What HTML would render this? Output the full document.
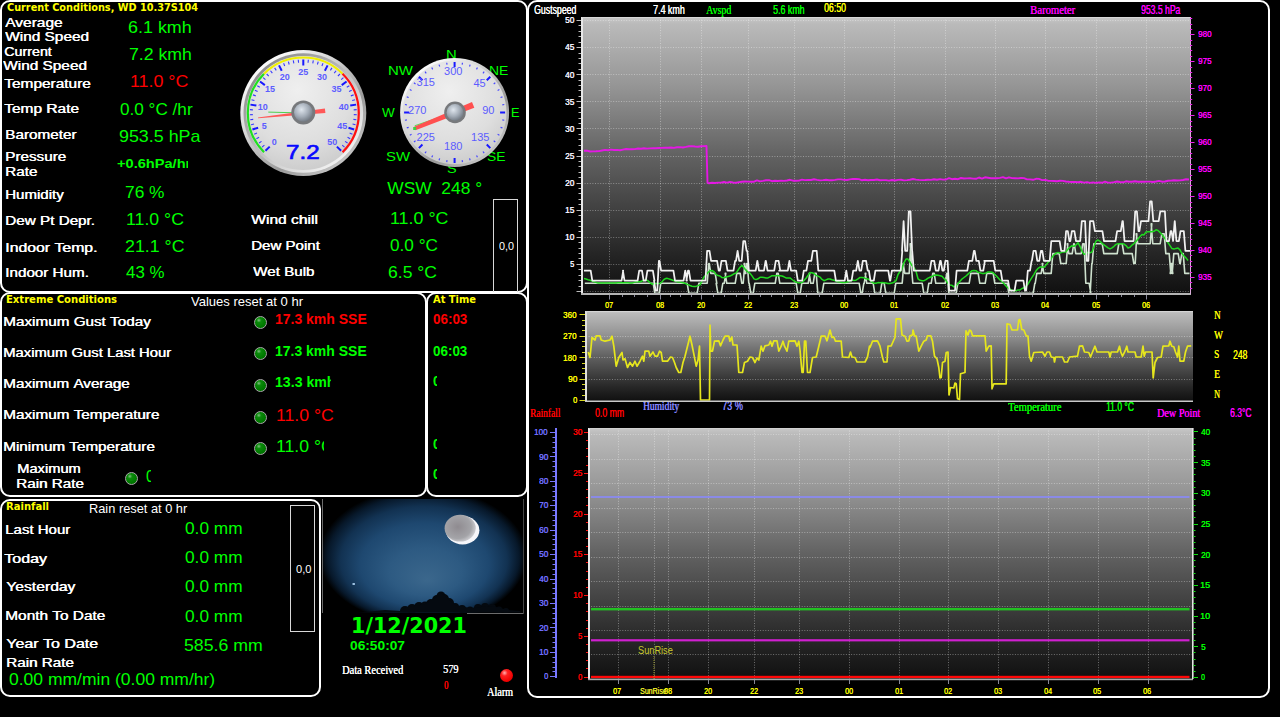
<!DOCTYPE html>
<html><head><meta charset="utf-8"><title>Weather Display</title>
<style>
html,body{margin:0;padding:0;background:#000;}
body{width:1280px;height:717px;position:relative;overflow:hidden;font-family:"Liberation Sans",sans-serif;}
.p{position:absolute;box-sizing:border-box;border:2px solid #fff;border-radius:10px;}
.t{position:absolute;white-space:pre;transform-origin:0 0;}
.c{position:absolute;overflow:hidden;}
.bx{position:absolute;box-sizing:border-box;border:1px solid #d8d8d8;}
.led{position:absolute;width:13px;height:13px;border-radius:50%;box-sizing:border-box;border:1px solid #a8a8a8;background:radial-gradient(circle at 35% 30%,#7fbf7f 0,#0a8a0a 22%,#007a00 60%,#006400 100%);}
svg{position:absolute;left:0;top:0;}
</style></head><body>

<div class="p" style="left:0;top:0;width:527.5px;height:292.6px"></div>
<div class="p" style="left:0;top:292px;width:427px;height:205px"></div>
<div class="p" style="left:426px;top:292px;width:101.5px;height:205px"></div>
<div class="p" style="left:0;top:499px;width:321px;height:198px"></div>
<div class="p" style="left:526.5px;top:0;width:743.5px;height:698px"></div>
<div class="bx" style="left:493px;top:199px;width:25.4px;height:93px;border-bottom:none"></div>
<div class="bx" style="left:290px;top:505px;width:25.4px;height:127px"></div>

<svg width="1280" height="717" viewBox="0 0 1280 717">
<defs>
<linearGradient id="gg" x1="0" y1="0" x2="0" y2="1"><stop offset="0" stop-color="#c8c8c8"/><stop offset="0.025" stop-color="#bababa"/><stop offset="0.25" stop-color="#959595"/><stop offset="0.5" stop-color="#626262"/><stop offset="0.85" stop-color="#262626"/><stop offset="1" stop-color="#101010"/></linearGradient>
</defs>
<rect x="582" y="17" width="609" height="277" fill="url(#gg)"/>
<rect x="586" y="311" width="607" height="90" fill="url(#gg)"/>
<rect x="588.5" y="428" width="604.5" height="251" fill="url(#gg)"/>
<path d="M609.5,17V294M660.5,17V294M701.5,17V294M748.5,17V294M794.5,17V294M844.5,17V294M894.5,17V294M945.5,17V294M995.5,17V294M1045.5,17V294M1096.5,17V294M1146.5,17V294M582,20.5H1191M582,47.5H1191M582,74.5H1191M582,101.5H1191M582,128.5H1191M582,156.5H1191M582,183.5H1191M582,210.5H1191M582,237.5H1191M582,264.5H1191M582,291.5H1191M586,336.5H1193M586,357.5H1193M586,379.5H1193M618.5,428V679M654.5,428V679M668.5,428V679M708.5,428V679M754.5,428V679M799.5,428V679M849.5,428V679M899.5,428V679M948.5,428V679M998.5,428V679M1048.5,428V679M1098.5,428V679M1148.5,428V679M588.5,434.5H1193M588.5,459.5H1193M588.5,483.5H1193M588.5,508.5H1193M588.5,532.5H1193M588.5,557.5H1193M588.5,581.5H1193M588.5,606.5H1193M588.5,630.5H1193M588.5,654.5H1193" stroke="#fff" stroke-opacity="0.36" stroke-width="1" stroke-dasharray="1 1.6" fill="none"/>
<polyline points="584.8,283.3 653.2,283.3 654.8,293.2 659.2,293.2 660.8,283.3 687.2,283.3 688.8,293.2 697.2,293.2 698.8,283.3 707.2,283.3 708.8,263.5 709.2,263.5 710.8,273.4 715.2,273.4 716.8,283.3 716.2,283.3 717.8,293.2 721.2,293.2 722.8,283.3 724.2,283.3 725.8,273.4 725.2,273.4 726.8,283.3 735.2,283.3 736.8,273.4 740.2,273.4 741.8,283.3 743.2,283.3 744.8,263.5 744.2,263.5 745.8,273.4 745.2,273.4 746.8,263.5 747.2,263.5 748.8,283.3 749.2,283.3 750.8,293.2 753.2,293.2 754.8,283.3 775.2,283.3 776.8,273.4 778.2,273.4 779.8,283.3 796.2,283.3 797.8,293.2 800.2,293.2 801.8,283.3 808.2,283.3 809.8,273.4 809.2,273.4 810.8,283.3 813.2,283.3 814.8,273.4 816.2,273.4 817.8,293.2 822.2,293.2 823.8,283.3 859.2,283.3 860.8,293.2 862.2,293.2 863.8,283.3 864.2,283.3 865.8,273.4 865.2,273.4 866.8,283.3 873.2,283.3 874.8,293.2 880.2,293.2 881.8,283.3 884.2,283.3 885.8,293.2 894.2,293.2 895.8,283.3 902.2,283.3 903.8,263.5 903.2,263.5 904.8,273.4 909.2,273.4 910.8,243.7 910.2,243.7 911.8,263.5 911.2,263.5 912.8,283.3 922.2,283.3 923.8,293.2 927.2,293.2 928.8,283.3 931.2,283.3 932.8,273.4 934.2,273.4 935.8,283.3 945.2,283.3 946.8,273.4 947.2,273.4 948.8,293.2 956.2,293.2 957.8,283.3 969.2,283.3 970.8,273.4 978.2,273.4 979.8,283.3 985.2,283.3 986.8,273.4 993.2,273.4 994.8,283.3 1007.2,283.3 1008.8,293.2 1033.2,293.2 1034.8,283.3 1035.2,283.3 1036.8,273.4 1041.2,273.4 1042.8,263.5 1042.2,263.5 1043.8,273.4 1051.2,273.4 1052.8,253.6 1059.2,253.6 1060.8,263.5 1066.2,263.5 1067.8,243.7 1067.2,243.7 1068.8,253.6 1072.2,253.6 1073.8,243.7 1074.2,243.7 1075.8,253.6 1081.2,253.6 1082.8,243.7 1084.2,243.7 1085.8,283.3 1089.2,283.3 1090.8,293.2 1090.2,293.2 1091.8,263.5 1092.2,263.5 1093.8,243.7 1102.2,243.7 1103.8,253.6 1117.2,253.6 1118.8,243.7 1122.2,243.7 1123.8,253.6 1132.2,253.6 1133.8,263.5 1135.2,263.5 1136.8,233.8 1136.2,233.8 1137.8,243.7 1150.2,243.7 1151.8,223.9 1151.2,223.9 1152.8,243.7 1160.2,243.7 1161.8,233.8 1164.2,233.8 1165.8,253.6 1169.2,253.6 1170.8,273.4 1170.2,273.4 1171.8,263.5 1171.2,263.5 1172.8,273.4 1172.2,273.4 1173.8,253.6 1178.2,253.6 1179.8,263.5 1180.2,263.5 1181.8,253.6 1183.2,253.6 1184.8,273.4 1189.5,273.4" fill="none" stroke="#d8ecd8" stroke-width="1.6" stroke-linejoin="round" stroke-opacity=".95"/>
<polyline points="584.0,278.6 586.0,279.0 588.0,279.7 590.0,280.3 592.0,281.0 594.0,281.7 596.0,282.4 598.0,283.1 600.0,283.1 602.0,283.1 604.0,283.1 606.0,283.1 608.0,283.1 610.0,283.1 612.0,283.1 614.0,283.1 616.0,283.1 618.0,282.7 620.0,282.7 622.0,282.7 624.0,282.7 626.0,282.7 628.0,282.7 630.0,283.1 632.0,283.1 634.0,282.4 636.0,281.7 638.0,281.7 640.0,281.7 642.0,281.0 644.0,280.3 646.0,280.0 648.0,280.8 650.0,282.6 652.0,284.2 654.0,283.5 656.0,283.5 658.0,283.5 660.0,283.5 662.0,281.7 664.0,279.5 666.0,278.3 668.0,278.6 670.0,279.3 672.0,280.0 674.0,280.7 676.0,281.4 678.0,282.1 680.0,282.1 682.0,282.5 684.0,283.0 686.0,283.8 688.0,284.6 690.0,285.5 692.0,286.2 694.0,286.6 696.0,286.4 698.0,285.6 700.0,284.8 702.0,281.0 704.0,276.9 706.0,274.7 708.0,272.5 710.0,270.7 712.0,270.5 714.0,271.7 716.0,274.4 718.0,275.6 720.0,276.0 722.0,277.6 724.0,277.8 726.0,277.0 728.0,276.5 730.0,276.1 732.0,275.0 734.0,273.8 736.0,273.1 738.0,270.2 740.0,267.2 742.0,265.4 744.0,267.7 746.0,270.4 748.0,271.9 750.0,273.3 752.0,275.9 754.0,278.9 756.0,279.6 758.0,278.8 760.0,277.3 762.0,277.3 764.0,277.6 766.0,277.9 768.0,277.9 770.0,276.8 772.0,275.7 774.0,275.7 776.0,275.7 778.0,275.7 780.0,275.7 782.0,276.0 784.0,276.8 786.0,277.9 788.0,277.9 790.0,277.9 792.0,279.5 794.0,281.0 796.0,282.0 798.0,282.7 800.0,282.7 802.0,282.4 804.0,280.5 806.0,278.3 808.0,275.4 810.0,272.5 812.0,272.7 814.0,273.5 816.0,275.4 818.0,276.1 820.0,277.1 822.0,279.4 824.0,280.7 826.0,279.9 828.0,279.0 830.0,279.0 832.0,279.7 834.0,280.3 836.0,281.0 838.0,281.7 840.0,282.1 842.0,282.4 844.0,282.4 846.0,282.4 848.0,281.7 850.0,281.0 852.0,280.0 854.0,280.4 856.0,280.2 858.0,278.9 860.0,277.4 862.0,277.4 864.0,277.8 866.0,278.8 868.0,279.0 870.0,280.2 872.0,282.1 874.0,283.3 876.0,283.3 878.0,282.6 880.0,282.7 882.0,282.4 884.0,282.7 886.0,283.1 888.0,283.5 890.0,283.5 892.0,283.1 894.0,282.2 896.0,280.7 898.0,274.5 900.0,271.5 902.0,268.8 904.0,262.6 906.0,259.1 908.0,259.1 910.0,262.3 912.0,265.5 914.0,267.7 916.0,271.3 918.0,278.8 920.0,280.3 922.0,280.7 924.0,280.7 926.0,279.6 928.0,278.1 930.0,277.3 932.0,276.5 934.0,275.3 936.0,275.0 938.0,275.3 940.0,275.7 942.0,276.2 944.0,278.4 946.0,280.6 948.0,283.5 950.0,285.0 952.0,285.3 954.0,286.9 956.0,285.7 958.0,283.5 960.0,281.3 962.0,279.0 964.0,277.5 966.0,276.0 968.0,274.1 970.0,272.3 972.0,270.7 974.0,270.4 976.0,270.7 978.0,272.3 980.0,272.7 982.0,273.4 984.0,273.4 986.0,273.0 988.0,271.9 990.0,271.9 992.0,272.2 994.0,273.7 996.0,275.6 998.0,277.8 1000.0,280.0 1002.0,281.4 1004.0,283.7 1006.0,285.9 1008.0,288.1 1010.0,289.3 1012.0,290.1 1014.0,290.9 1016.0,290.6 1018.0,289.9 1020.0,289.9 1022.0,288.5 1024.0,287.8 1026.0,286.5 1028.0,284.0 1030.0,280.7 1032.0,277.3 1034.0,274.3 1036.0,270.8 1038.0,268.4 1040.0,267.1 1042.0,266.9 1044.0,267.3 1046.0,265.1 1048.0,262.4 1050.0,260.4 1052.0,257.4 1054.0,254.8 1056.0,253.2 1058.0,252.4 1060.0,253.2 1062.0,252.1 1064.0,252.1 1066.0,251.8 1068.0,249.1 1070.0,247.2 1072.0,245.7 1074.0,246.4 1076.0,244.9 1078.0,242.7 1080.0,246.3 1082.0,251.3 1084.0,254.3 1086.0,253.7 1088.0,252.2 1090.0,252.9 1092.0,251.9 1094.0,246.5 1096.0,241.1 1098.0,240.0 1100.0,241.4 1102.0,243.3 1104.0,244.8 1106.0,246.3 1108.0,247.8 1110.0,248.9 1112.0,247.8 1114.0,246.3 1116.0,244.4 1118.0,243.8 1120.0,243.8 1122.0,243.8 1124.0,244.1 1126.0,245.6 1128.0,248.0 1130.0,247.3 1132.0,245.1 1134.0,243.6 1136.0,241.4 1138.0,239.1 1140.0,236.5 1142.0,234.5 1144.0,234.9 1146.0,232.0 1148.0,231.7 1150.0,231.7 1152.0,231.7 1154.0,231.3 1156.0,229.8 1158.0,230.5 1160.0,232.4 1162.0,234.6 1164.0,237.3 1166.0,240.1 1168.0,242.7 1170.0,245.7 1172.0,248.6 1174.0,249.1 1176.0,248.4 1178.0,248.0 1180.0,249.9 1182.0,253.6 1184.0,256.0 1186.0,257.9 1188.0,260.5" fill="none" stroke="#1fd81f" stroke-width="1.5" stroke-linejoin="round"/>
<polyline points="584.0,270.7 590.7,270.7 592.3,280.6 621.6,280.6 623.2,270.7 622.9,270.7 624.5,280.6 637.6,280.6 639.2,270.7 642.0,270.7 643.6,280.6 645.8,280.6 647.4,270.7 652.9,270.7 654.5,280.6 654.0,280.6 655.6,290.5 657.3,290.5 658.9,260.8 659.5,260.8 661.1,270.7 673.4,270.7 675.0,280.6 683.6,280.6 685.2,270.7 685.3,270.7 686.9,280.6 686.4,280.6 688.0,270.7 688.9,270.7 690.5,280.6 705.5,280.6 707.1,250.9 709.5,250.9 711.1,260.8 717.1,260.8 718.7,270.7 719.9,270.7 721.5,260.8 725.9,260.8 727.5,270.7 733.5,270.7 735.1,260.8 736.0,260.8 737.6,250.9 737.6,250.9 739.2,260.8 741.7,260.8 743.3,241.0 745.0,241.0 746.6,250.9 747.3,250.9 748.9,270.7 755.7,270.7 757.3,260.8 757.4,260.8 759.0,270.7 764.0,270.7 765.6,260.8 765.9,260.8 767.5,270.7 774.2,270.7 775.8,260.8 778.6,260.8 780.2,270.7 779.2,270.7 780.8,270.7 787.8,270.7 789.4,260.8 789.4,260.8 791.0,270.7 796.2,270.7 797.8,280.6 802.2,280.6 803.8,270.7 806.4,270.7 808.0,260.8 811.3,260.8 812.9,250.9 816.7,250.9 818.3,270.7 834.3,270.7 835.9,280.6 844.7,280.6 846.3,270.7 846.3,270.7 847.9,280.6 851.6,280.6 853.2,270.7 856.2,270.7 857.8,260.8 857.9,260.8 859.5,270.7 861.2,270.7 862.8,260.8 866.1,260.8 867.7,270.7 868.9,270.7 870.5,280.6 873.8,280.6 875.4,270.7 888.3,270.7 889.9,280.6 890.3,280.6 891.9,270.7 900.7,270.7 902.3,250.9 902.0,250.9 903.6,221.2 903.6,221.2 905.2,250.9 907.2,250.9 908.8,211.3 910.5,211.3 912.1,250.9 912.2,250.9 913.8,270.7 929.8,270.7 931.4,260.8 934.2,260.8 935.8,270.7 938.5,270.7 940.1,260.8 940.8,260.8 942.4,270.7 943.8,270.7 945.4,260.8 947.6,260.8 949.2,290.5 955.0,290.5 956.6,270.7 967.3,270.7 968.9,260.8 972.3,260.8 973.9,250.9 974.7,250.9 976.3,260.8 978.8,260.8 980.4,270.7 983.3,270.7 984.9,260.8 984.2,260.8 985.8,260.8 993.7,260.8 995.3,270.7 1000.7,270.7 1002.3,280.6 1008.1,280.6 1009.7,290.5 1014.6,290.5 1016.2,280.6 1023.4,280.6 1025.0,290.5 1026.2,290.5 1027.8,270.7 1030.0,270.7 1031.6,260.8 1031.9,260.8 1033.5,250.9 1035.7,250.9 1037.3,260.8 1039.3,260.8 1040.9,250.9 1042.3,250.9 1043.9,260.8 1049.7,260.8 1051.3,241.0 1059.6,241.0 1061.2,250.9 1064.5,250.9 1066.1,231.1 1067.8,231.1 1069.4,241.0 1070.3,241.0 1071.9,231.1 1074.4,231.1 1076.0,241.0 1080.2,241.0 1081.8,221.2 1085.1,221.2 1086.7,260.8 1088.4,260.8 1090.0,221.2 1093.3,221.2 1094.9,231.1 1102.4,231.1 1104.0,241.0 1115.5,241.0 1117.1,231.1 1120.8,231.1 1122.4,221.2 1122.9,221.2 1124.5,241.0 1133.6,241.0 1135.2,211.3 1136.9,211.3 1138.5,231.1 1139.4,231.1 1141.0,221.2 1148.5,221.2 1150.1,201.4 1151.7,201.4 1153.3,221.2 1158.7,221.2 1160.3,211.3 1164.9,211.3 1166.5,241.0 1169.0,241.0 1170.6,231.1 1171.5,231.1 1173.1,241.0 1173.1,241.0 1174.7,221.2 1174.8,221.2 1176.4,241.0 1178.9,241.0 1180.5,231.1 1183.8,231.1 1185.4,250.9 1189.1,250.9 1190.7,250.9 1189.5,250.9" fill="none" stroke="#f2f2f2" stroke-width="1.75" stroke-linejoin="round"/>
<polyline points="584.0,150.8 587.0,150.7 590.0,151.5 593.0,151.4 596.0,151.3 599.0,151.1 602.0,150.5 605.0,149.9 608.0,150.3 611.0,149.6 614.0,150.0 617.0,149.9 620.0,150.2 623.0,149.6 626.0,149.0 629.0,149.3 632.0,149.2 635.0,149.1 638.0,148.5 641.0,148.8 644.0,148.2 647.0,148.6 650.0,148.4 653.0,148.3 656.0,148.2 659.0,148.0 662.0,147.9 665.0,147.8 668.0,147.7 671.0,147.5 674.0,147.9 677.0,147.3 680.0,147.1 683.0,147.5 686.0,146.9 689.0,146.2 692.0,146.1 695.0,146.5 698.0,146.8 701.0,146.2 704.0,146.1 706.5,146.0 707.5,182.7 709.0,183.3 712.0,182.7 715.0,183.0 718.0,182.6 721.0,182.6 724.0,182.0 727.0,182.6 730.0,181.9 733.0,182.5 736.0,182.8 739.0,182.1 742.0,181.8 745.0,181.5 748.0,181.6 751.0,181.7 754.0,181.7 757.0,180.4 760.0,181.4 763.0,180.9 766.0,180.3 769.0,180.2 772.0,181.2 775.0,180.7 778.0,181.0 781.0,180.6 784.0,180.9 787.0,180.5 790.0,179.8 793.0,180.7 796.0,180.7 799.0,180.6 802.0,179.6 805.0,180.1 808.0,180.0 811.0,180.0 814.0,179.3 817.0,179.9 820.0,180.4 823.0,180.1 826.0,179.7 829.0,180.2 832.0,180.2 835.0,179.9 838.0,179.4 841.0,179.4 844.0,179.9 847.0,180.0 850.0,179.4 853.0,178.9 856.0,179.0 859.0,179.1 862.0,180.3 865.0,179.8 868.0,180.3 871.0,180.0 874.0,180.0 877.0,179.5 880.0,180.2 883.0,180.1 886.0,180.1 889.0,180.6 892.0,180.0 895.0,180.5 898.0,179.9 901.0,179.8 904.0,180.4 907.0,180.1 910.0,179.7 913.0,179.0 916.0,179.6 919.0,179.9 922.0,180.1 925.0,180.0 928.0,179.7 931.0,179.9 934.0,179.2 937.0,179.7 940.0,179.1 943.0,179.6 946.0,179.5 949.0,178.2 952.0,179.2 955.0,178.7 958.0,179.2 961.0,178.0 964.0,178.5 967.0,178.4 970.0,178.3 973.0,178.6 976.0,178.8 979.0,177.5 982.0,178.6 985.0,177.3 988.0,177.8 991.0,178.3 994.0,178.3 997.0,178.2 1000.0,177.9 1003.0,177.1 1006.0,178.4 1009.0,177.3 1012.0,178.1 1015.0,178.2 1018.0,178.4 1021.0,178.0 1024.0,178.1 1027.0,179.4 1030.0,179.4 1033.0,179.8 1036.0,178.8 1039.0,178.9 1042.0,180.1 1045.0,179.9 1048.0,180.7 1051.0,180.9 1054.0,181.0 1057.0,181.2 1060.0,180.8 1063.0,180.9 1066.0,181.5 1069.0,181.8 1072.0,182.0 1075.0,181.9 1078.0,182.3 1081.0,181.8 1084.0,182.6 1087.0,182.1 1090.0,182.9 1093.0,182.4 1096.0,182.9 1099.0,182.4 1102.0,182.8 1105.0,181.7 1108.0,182.6 1111.0,182.6 1114.0,182.1 1117.0,181.5 1120.0,182.0 1123.0,182.3 1126.0,181.3 1129.0,181.8 1132.0,181.8 1135.0,181.2 1138.0,181.7 1141.0,181.7 1144.0,181.7 1147.0,181.6 1150.0,181.6 1153.0,182.0 1156.0,181.5 1159.0,180.9 1162.0,181.7 1165.0,181.5 1168.0,180.8 1171.0,180.6 1174.0,180.3 1177.0,180.5 1180.0,180.4 1183.0,180.0 1186.0,179.3 1189.0,179.5" fill="none" stroke="#e418e4" stroke-width="1.9" stroke-linejoin="round"/>
<polyline points="588.2,352.0 590.0,357.5 592.0,337.5 595.0,340.0 596.2,335.8 600.0,335.8 601.2,340.0 605.0,341.2 610.0,340.0 612.0,336.2 613.8,346.2 616.2,366.2 618.8,357.5 622.0,352.5 623.0,360.0 625.0,358.8 627.5,367.5 630.0,362.5 632.5,366.2 635.0,361.2 637.0,366.2 640.0,361.2 642.5,356.2 643.8,361.2 645.0,351.2 648.8,351.2 650.0,356.2 653.0,352.0 655.0,356.2 657.5,356.2 659.5,351.2 661.2,352.5 662.5,361.2 667.5,361.2 670.5,357.0 672.5,357.5 674.5,362.5 676.2,367.5 678.8,372.5 680.8,372.5 683.0,362.5 685.0,356.2 687.5,346.2 690.0,336.2 692.0,345.0 693.8,353.8 696.2,366.2 698.0,360.0 699.5,346.2 700.5,400.0 709.5,400.0 710.0,325.0 710.8,351.2 712.5,351.2 714.5,341.2 718.8,340.8 720.5,345.8 723.0,340.0 725.0,336.2 728.8,336.2 730.0,341.2 731.8,337.0 733.0,345.0 737.0,345.0 738.8,372.5 742.5,372.5 744.5,362.5 747.5,361.2 750.0,357.0 752.5,357.5 755.0,362.5 757.0,358.0 758.8,360.0 761.2,346.2 763.0,351.2 765.0,345.8 768.8,345.0 770.5,341.2 772.0,346.2 773.8,340.8 777.0,340.8 778.8,351.2 781.2,346.2 783.0,341.2 784.5,346.2 787.0,351.2 788.8,341.2 795.0,340.8 797.0,346.2 798.8,341.2 800.0,350.0 802.0,372.5 803.2,372.5 804.5,341.2 805.8,341.2 807.5,372.5 810.0,372.5 812.5,357.5 816.2,357.0 818.8,346.2 821.2,336.2 825.0,336.2 827.0,340.8 830.0,330.0 832.0,337.5 833.8,337.0 835.5,341.2 841.2,341.2 842.5,357.0 848.8,357.5 850.5,352.0 852.0,357.0 855.0,357.5 857.0,362.0 865.0,362.0 867.5,357.0 869.5,346.2 870.0,347.5 872.5,341.2 877.5,340.8 880.0,346.2 882.5,357.5 883.8,362.0 887.0,362.0 888.0,346.2 891.2,345.8 893.8,340.0 895.0,337.5 896.2,318.8 900.5,318.8 902.0,335.0 905.0,336.2 907.0,341.2 908.8,340.8 910.0,335.8 912.5,335.0 913.0,330.0 914.5,335.8 916.2,336.2 918.8,351.2 921.2,346.2 923.8,341.2 926.2,340.0 927.5,335.8 930.8,335.8 932.5,341.2 934.5,356.2 937.0,358.8 938.8,367.5 940.0,378.0 941.2,377.5 942.5,362.5 945.0,361.2 946.2,352.5 948.0,352.0 949.0,395.0 950.5,387.5 953.8,388.0 955.0,383.0 956.2,383.8 957.5,398.8 959.5,399.5 960.5,373.8 965.0,372.5 966.0,330.8 968.0,335.0 969.5,330.0 971.2,331.2 972.5,335.8 985.0,335.8 986.2,351.2 988.8,346.2 991.2,345.8 992.0,388.8 993.8,383.8 1006.2,383.8 1007.0,323.8 1010.0,324.5 1012.0,330.0 1017.5,330.0 1018.8,320.0 1020.0,319.5 1021.8,329.5 1023.8,330.0 1026.2,335.8 1028.0,336.2 1029.5,356.2 1031.2,361.2 1033.8,352.5 1042.5,352.0 1045.0,356.2 1047.0,352.0 1049.5,352.0 1051.2,357.0 1053.8,357.5 1054.5,362.0 1055.5,357.0 1062.5,357.0 1064.5,362.0 1067.5,362.0 1069.5,357.0 1077.5,356.2 1079.5,346.2 1082.5,345.8 1084.5,352.0 1088.8,352.5 1090.5,357.0 1092.5,352.0 1095.0,346.2 1097.0,352.0 1108.8,352.0 1110.0,357.0 1111.2,352.0 1117.5,352.0 1119.5,346.2 1120.8,352.0 1122.5,356.2 1125.0,351.2 1126.8,346.2 1128.0,352.0 1135.0,352.0 1136.2,357.0 1141.2,357.0 1143.0,346.2 1144.2,356.2 1145.5,352.0 1152.0,352.0 1153.2,378.0 1155.0,362.5 1157.5,357.5 1161.2,357.0 1163.0,346.2 1168.8,345.8 1170.0,341.2 1171.8,346.2 1173.8,346.8 1175.5,352.0 1177.5,357.0 1178.8,346.2 1180.0,361.2 1183.8,361.2 1185.5,352.0 1187.5,346.2 1191.2,345.8" fill="none" stroke="#e6e61e" stroke-width="1.7" stroke-linejoin="round"/>
<rect x="591" y="496" width="598.5" height="2" fill="#8a8ae6"/>
<rect x="591" y="608" width="598.5" height="2.4" fill="#22c022"/>
<rect x="591" y="639.2" width="598.5" height="2.2" fill="#d020d0"/>
<rect x="591" y="675.8" width="598.5" height="2.3" fill="#ff0808"/>
<path d="M654,656V679" stroke="#b8b830" stroke-width="1" stroke-dasharray="1 1" stroke-opacity=".8" fill="none"/>
<rect x="581" y="17" width="2" height="278" fill="#e8e8e8"/>
<rect x="581" y="293" width="610" height="2" fill="#b4b4b4"/>
<rect x="582" y="17" width="609" height="1" fill="#d8d8d8"/>
<rect x="1190" y="17" width="1" height="277" fill="#d8a8d8"/>
<path d="M576.5,291.5H581M578.5,286.5H581M578.5,280.5H581M578.5,275.5H581M578.5,269.5H581M576.5,264.5H581M578.5,258.5H581M578.5,253.5H581M578.5,248.5H581M578.5,242.5H581M576.5,237.5H581M578.5,231.5H581M578.5,226.5H581M578.5,221.5H581M578.5,215.5H581M576.5,210.5H581M578.5,204.5H581M578.5,199.5H581M578.5,193.5H581M578.5,188.5H581M576.5,183.5H581M578.5,177.5H581M578.5,172.5H581M578.5,166.5H581M578.5,161.5H581M576.5,156.5H581M578.5,150.5H581M578.5,145.5H581M578.5,139.5H581M578.5,134.5H581M576.5,128.5H581M578.5,123.5H581M578.5,118.5H581M578.5,112.5H581M578.5,107.5H581M576.5,101.5H581M578.5,96.5H581M578.5,90.5H581M578.5,85.5H581M578.5,80.5H581M576.5,74.5H581M578.5,69.5H581M578.5,63.5H581M578.5,58.5H581M578.5,53.5H581M576.5,47.5H581M578.5,42.5H581M578.5,36.5H581M578.5,31.5H581M578.5,25.5H581M576.5,20.5H581" stroke="#bcbcbc" stroke-width="1" fill="none"/>
<path d="M1190,288.5H1192.2M1190,282.5H1192.2M1190,277.5H1194.5M1190,272.5H1192.2M1190,266.5H1192.2M1190,261.5H1192.2M1190,255.5H1192.2M1190,250.5H1194.5M1190,245.5H1192.2M1190,239.5H1192.2M1190,234.5H1192.2M1190,228.5H1192.2M1190,223.5H1194.5M1190,218.5H1192.2M1190,212.5H1192.2M1190,207.5H1192.2M1190,202.5H1192.2M1190,196.5H1194.5M1190,191.5H1192.2M1190,185.5H1192.2M1190,180.5H1192.2M1190,175.5H1192.2M1190,169.5H1194.5M1190,164.5H1192.2M1190,158.5H1192.2M1190,153.5H1192.2M1190,148.5H1192.2M1190,142.5H1194.5M1190,137.5H1192.2M1190,131.5H1192.2M1190,126.5H1192.2M1190,121.5H1192.2M1190,115.5H1194.5M1190,110.5H1192.2M1190,104.5H1192.2M1190,99.5H1192.2M1190,94.5H1192.2M1190,88.5H1194.5M1190,83.5H1192.2M1190,77.5H1192.2M1190,72.5H1192.2M1190,67.5H1192.2M1190,61.5H1194.5M1190,56.5H1192.2M1190,50.5H1192.2M1190,45.5H1192.2M1190,40.5H1192.2M1190,34.5H1194.5M1190,29.5H1192.2M1190,24.5H1192.2M1190,18.5H1192.2" stroke="#ee22ee" stroke-width="1.2" fill="none"/>
<path d="M609.5,295V299.5M660.5,295V299.5M701.5,295V299.5M748.5,295V299.5M794.5,295V299.5M844.5,295V299.5M894.5,295V299.5M945.5,295V299.5M995.5,295V299.5M1045.5,295V299.5M1096.5,295V299.5M1146.5,295V299.5M622.5,295V297M634.5,295V297M647.5,295V297M670.5,295V297M680.5,295V297M691.5,295V297M713.5,295V297M724.5,295V297M736.5,295V297M760.5,295V297M771.5,295V297M782.5,295V297M806.5,295V297M819.5,295V297M832.5,295V297M856.5,295V297M869.5,295V297M882.5,295V297M907.5,295V297M920.5,295V297M932.5,295V297M958.5,295V297M970.5,295V297M982.5,295V297M1008.5,295V297M1020.5,295V297M1032.5,295V297M1058.5,295V297M1070.5,295V297M1083.5,295V297M1108.5,295V297M1121.5,295V297M1134.5,295V297" stroke="#889" stroke-width="1" fill="none"/>
<rect x="585" y="311" width="2" height="91" fill="#e0e0e0"/>
<rect x="585" y="400.5" width="608" height="1.5" fill="#c8c8c8"/>
<rect x="586" y="311" width="607" height="1" fill="#d4d4d4"/>
<path d="M579.5,400.5H585M582,395.5H585M582,389.5H585M582,384.5H585M579.5,379.5H585M582,373.5H585M582,368.5H585M582,363.5H585M579.5,357.5H585M582,352.5H585M582,346.5H585M582,341.5H585M579.5,336.5H585M582,330.5H585M582,325.5H585M582,320.5H585M579.5,314.5H585" stroke="#d8d820" stroke-width="1.2" fill="none"/>
<rect x="588" y="428" width="2" height="252" fill="#ececec"/>
<rect x="588" y="678.6" width="605" height="1.6" fill="#a8a8a8"/>
<rect x="589" y="428" width="604" height="1" fill="#d0d0d0"/>
<rect x="1192" y="428" width="1.6" height="251" fill="#e4e4e4"/>
<rect x="555" y="428" width="2" height="250" fill="#7878ff"/>
<path d="M550,676.5H555M552.5,671.5H555M552.5,667.5H555M552.5,662.5H555M552.5,657.5H555M550,652.5H555M552.5,647.5H555M552.5,642.5H555M552.5,637.5H555M552.5,632.5H555M550,627.5H555M552.5,623.5H555M552.5,618.5H555M552.5,613.5H555M552.5,608.5H555M550,603.5H555M552.5,598.5H555M552.5,593.5H555M552.5,588.5H555M552.5,583.5H555M550,579.5H555M552.5,574.5H555M552.5,569.5H555M552.5,564.5H555M552.5,559.5H555M550,554.5H555M552.5,549.5H555M552.5,544.5H555M552.5,539.5H555M552.5,535.5H555M550,530.5H555M552.5,525.5H555M552.5,520.5H555M552.5,515.5H555M552.5,510.5H555M550,505.5H555M552.5,500.5H555M552.5,496.5H555M552.5,491.5H555M552.5,486.5H555M550,481.5H555M552.5,476.5H555M552.5,471.5H555M552.5,466.5H555M552.5,461.5H555M550,456.5H555M552.5,452.5H555M552.5,447.5H555M552.5,442.5H555M552.5,437.5H555M550,432.5H555" stroke="#7878ff" stroke-width="1.2" fill="none"/>
<path d="M584,677.5H588M586,668.5H588M586,660.5H588M586,652.5H588M586,644.5H588M584,636.5H588M586,628.5H588M586,620.5H588M586,611.5H588M586,603.5H588M584,595.5H588M586,587.5H588M586,579.5H588M586,571.5H588M586,562.5H588M584,554.5H588M586,546.5H588M586,538.5H588M586,530.5H588M586,522.5H588M584,514.5H588M586,505.5H588M586,497.5H588M586,489.5H588M586,481.5H588M584,473.5H588M586,465.5H588M586,456.5H588M586,448.5H588M586,440.5H588M584,432.5H588" stroke="#ff1010" stroke-width="1.2" fill="none"/>
<path d="M1193.5,677.5H1198M1193.5,671.5H1195.5M1193.5,665.5H1195.5M1193.5,659.5H1195.5M1193.5,652.5H1195.5M1193.5,646.5H1198M1193.5,640.5H1195.5M1193.5,634.5H1195.5M1193.5,628.5H1195.5M1193.5,622.5H1195.5M1193.5,616.5H1198M1193.5,609.5H1195.5M1193.5,603.5H1195.5M1193.5,597.5H1195.5M1193.5,591.5H1195.5M1193.5,585.5H1198M1193.5,579.5H1195.5M1193.5,573.5H1195.5M1193.5,566.5H1195.5M1193.5,560.5H1195.5M1193.5,554.5H1198M1193.5,548.5H1195.5M1193.5,542.5H1195.5M1193.5,536.5H1195.5M1193.5,530.5H1195.5M1193.5,524.5H1198M1193.5,517.5H1195.5M1193.5,511.5H1195.5M1193.5,505.5H1195.5M1193.5,499.5H1195.5M1193.5,493.5H1198M1193.5,487.5H1195.5M1193.5,481.5H1195.5M1193.5,474.5H1195.5M1193.5,468.5H1195.5M1193.5,462.5H1198M1193.5,456.5H1195.5M1193.5,450.5H1195.5M1193.5,444.5H1195.5M1193.5,438.5H1195.5M1193.5,431.5H1198" stroke="#10e010" stroke-width="1.2" fill="none"/>
<path d="M618.5,680V684M668.5,680V684M708.5,680V684M754.5,680V684M799.5,680V684M849.5,680V684M899.5,680V684M948.5,680V684M998.5,680V684M1048.5,680V684M1098.5,680V684M1148.5,680V684" stroke="#889" stroke-width="1" fill="none"/>
</svg>
<div class="t" style="left:445.91px;top:46.40px;font-family:'Liberation Sans',sans-serif;font-weight:normal;font-size:13.62px;line-height:18px;color:#00ff00;transform:scaleX(1.0875)">N</div>
<div class="t" style="left:387.70px;top:61.70px;font-family:'Liberation Sans',sans-serif;font-weight:normal;font-size:13.62px;line-height:18px;color:#00ff00;transform:scaleX(1.1000)">NW</div>
<div class="t" style="left:489.28px;top:61.70px;font-family:'Liberation Sans',sans-serif;font-weight:normal;font-size:13.62px;line-height:18px;color:#00ff00;transform:scaleX(1.0222)">NE</div>
<div class="t" style="left:381.70px;top:103.60px;font-family:'Liberation Sans',sans-serif;font-weight:normal;font-size:13.62px;line-height:18px;color:#00ff00;transform:scaleX(0.9923)">W</div>
<div class="t" style="left:511.26px;top:103.60px;font-family:'Liberation Sans',sans-serif;font-weight:normal;font-size:13.62px;line-height:18px;color:#00ff00;transform:scaleX(0.9375)">E</div>
<div class="t" style="left:385.90px;top:147.80px;font-family:'Liberation Sans',sans-serif;font-weight:normal;font-size:13.62px;line-height:18px;color:#00ff00;transform:scaleX(1.0952)">SW</div>
<div class="t" style="left:486.68px;top:147.80px;font-family:'Liberation Sans',sans-serif;font-weight:normal;font-size:13.62px;line-height:18px;color:#00ff00;transform:scaleX(1.0176)">SE</div>
<div class="t" style="left:447.44px;top:159.80px;font-family:'Liberation Sans',sans-serif;font-weight:normal;font-size:13.62px;line-height:18px;color:#00ff00;transform:scaleX(1.0625)">S</div>
<svg width="1280" height="717" viewBox="0 0 1280 717">
<defs>
<linearGradient id="bz" x1="0.15" y1="0.1" x2="0.85" y2="0.9"><stop offset="0" stop-color="#ffffff"/><stop offset="0.35" stop-color="#d4d4d4"/><stop offset="0.7" stop-color="#9a9a9a"/><stop offset="1" stop-color="#c8c8c8"/></linearGradient>
<linearGradient id="bz2" x1="0.85" y1="0.9" x2="0.15" y2="0.1"><stop offset="0" stop-color="#f4f4f4"/><stop offset="1" stop-color="#8c8c8c"/></linearGradient>
<radialGradient id="fc" cx="0.45" cy="0.3" r="0.8"><stop offset="0" stop-color="#efefef"/><stop offset="0.6" stop-color="#dedede"/><stop offset="1" stop-color="#c6c6c6"/></radialGradient>
<radialGradient id="hb" cx="0.4" cy="0.35" r="0.7"><stop offset="0" stop-color="#dfe6ee"/><stop offset="0.55" stop-color="#a4adb8"/><stop offset="1" stop-color="#6c747e"/></radialGradient>
</defs>
<circle cx="303.3" cy="113.0" r="63" fill="url(#bz)"/>
<circle cx="303.3" cy="113.0" r="59.8" fill="url(#bz2)"/>
<circle cx="303.3" cy="113.0" r="57" fill="url(#fc)"/>
<path d="M264.06,152.24A55.5,55.5 0 0 1 264.06,73.76" stroke="#20e020" stroke-width="2.2" fill="none"/>
<path d="M264.06,73.76A55.5,55.5 0 0 1 342.54,73.76" stroke="#f0f000" stroke-width="2.2" fill="none"/>
<path d="M342.54,73.76A55.5,55.5 0 0 1 342.54,152.24" stroke="#ff1010" stroke-width="2.2" fill="none"/>
<path d="M269.71,146.59L265.47,150.83M258.12,127.68L252.42,129.53M256.38,105.57L250.46,104.63M264.87,85.08L260.02,81.55M281.74,70.68L279.01,65.33M303.30,65.50L303.30,59.50M324.86,70.68L327.59,65.33M341.73,85.08L346.58,81.55M350.22,105.57L356.14,104.63M348.48,127.68L354.18,129.53M336.89,146.59L341.13,150.83" stroke="#1818ff" stroke-width="2" fill="none"/>
<path d="M264.39,145.19L262.08,147.10M261.53,141.39L259.05,143.07M259.05,137.33L256.42,138.77M256.95,133.06L254.20,134.25M254.02,124.02L251.09,124.67M253.20,119.33L250.22,119.71M252.82,114.59L249.83,114.68M252.90,109.83L249.91,109.64M254.39,100.44L251.48,99.70M255.79,95.89L252.96,94.88M257.61,91.50L254.89,90.22M259.83,87.29L257.25,85.77M265.42,79.60L263.17,77.62M268.73,76.19L266.68,74.00M272.35,73.10L270.51,70.73M276.24,70.36L274.63,67.83M284.71,66.05L283.61,63.26M289.21,64.51L288.37,61.62M293.84,63.39L293.28,60.45M298.55,62.72L298.27,59.74M308.05,62.72L308.33,59.74M312.76,63.39L313.32,60.45M317.39,64.51L318.23,61.62M321.89,66.05L322.99,63.26M330.36,70.36L331.97,67.83M334.25,73.10L336.09,70.73M337.87,76.19L339.92,74.00M341.18,79.60L343.43,77.62M346.77,87.29L349.35,85.77M348.99,91.50L351.71,90.22M350.81,95.89L353.64,94.88M352.21,100.44L355.12,99.70M353.70,109.83L356.69,109.64M353.78,114.59L356.77,114.68M353.40,119.33L356.38,119.71M352.58,124.02L355.51,124.67M349.65,133.06L352.40,134.25M347.55,137.33L350.18,138.77M345.07,141.39L347.55,143.07M342.21,145.19L344.52,147.10" stroke="#3838ff" stroke-width="1.1" fill="none"/>
<text x="274.3" y="145.0" text-anchor="middle" font-family="Liberation Sans,sans-serif" font-weight="bold" font-size="9" fill="#5c5cff">0</text>
<text x="264.3" y="128.7" text-anchor="middle" font-family="Liberation Sans,sans-serif" font-weight="bold" font-size="9" fill="#5c5cff">5</text>
<text x="262.8" y="109.6" text-anchor="middle" font-family="Liberation Sans,sans-serif" font-weight="bold" font-size="9" fill="#5c5cff">10</text>
<text x="270.1" y="91.9" text-anchor="middle" font-family="Liberation Sans,sans-serif" font-weight="bold" font-size="9" fill="#5c5cff">15</text>
<text x="284.7" y="79.5" text-anchor="middle" font-family="Liberation Sans,sans-serif" font-weight="bold" font-size="9" fill="#5c5cff">20</text>
<text x="303.3" y="75.0" text-anchor="middle" font-family="Liberation Sans,sans-serif" font-weight="bold" font-size="9" fill="#5c5cff">25</text>
<text x="321.9" y="79.5" text-anchor="middle" font-family="Liberation Sans,sans-serif" font-weight="bold" font-size="9" fill="#5c5cff">30</text>
<text x="336.5" y="91.9" text-anchor="middle" font-family="Liberation Sans,sans-serif" font-weight="bold" font-size="9" fill="#5c5cff">35</text>
<text x="343.8" y="109.6" text-anchor="middle" font-family="Liberation Sans,sans-serif" font-weight="bold" font-size="9" fill="#5c5cff">40</text>
<text x="342.3" y="128.7" text-anchor="middle" font-family="Liberation Sans,sans-serif" font-weight="bold" font-size="9" fill="#5c5cff">45</text>
<text x="332.3" y="145.0" text-anchor="middle" font-family="Liberation Sans,sans-serif" font-weight="bold" font-size="9" fill="#5c5cff">50</text>
<text x="302.8" y="159.2" text-anchor="middle" font-family="Liberation Sans,sans-serif" font-size="21" fill="#0808ff" stroke="#0808ff" stroke-width="0.7" textLength="33.5" lengthAdjust="spacingAndGlyphs">7.2</text>
<line x1="303.3" y1="113.0" x2="268.3" y2="112.1" stroke="#50d050" stroke-width="1"/>
<polygon points="258.0,117.5 258.1,118.2 325.4,112.9 324.9,108.4" fill="#ff5858"/>
<circle cx="303.3" cy="112.4" r="12" fill="#77797c"/><circle cx="303.3" cy="112.4" r="9.3" fill="url(#hb)"/>
<circle cx="454.6" cy="112.4" r="54.5" fill="url(#bz)"/>
<circle cx="454.6" cy="112.4" r="51.9" fill="url(#fc)"/>
<path d="M454.60,66.90L454.60,61.90M486.77,80.23L490.31,76.69M500.10,112.40L505.10,112.40M486.77,144.57L490.31,148.11M454.60,157.90L454.60,162.90M422.43,144.57L418.89,148.11M409.10,112.40L404.10,112.40M422.43,80.23L418.89,76.69" stroke="#1818ff" stroke-width="2" fill="none"/>
<path d="M462.16,64.69L462.47,62.72M469.53,66.46L470.14,64.56M476.53,69.36L477.44,67.58M482.99,73.32L484.17,71.71M493.68,84.01L495.29,82.83M497.64,90.47L499.42,89.56M500.54,97.47L502.44,96.86M502.31,104.84L504.28,104.53M502.31,119.96L504.28,120.27M500.54,127.33L502.44,127.94M497.64,134.33L499.42,135.24M493.68,140.79L495.29,141.97M482.99,151.48L484.17,153.09M476.53,155.44L477.44,157.22M469.53,158.34L470.14,160.24M462.16,160.11L462.47,162.08M447.04,160.11L446.73,162.08M439.67,158.34L439.06,160.24M432.67,155.44L431.76,157.22M426.21,151.48L425.03,153.09M415.52,140.79L413.91,141.97M411.56,134.33L409.78,135.24M408.66,127.33L406.76,127.94M406.89,119.96L404.92,120.27M406.89,104.84L404.92,104.53M408.66,97.47L406.76,96.86M411.56,90.47L409.78,89.56M415.52,84.01L413.91,82.83M426.21,73.32L425.03,71.71M432.67,69.36L431.76,67.58M439.67,66.46L439.06,64.56M447.04,64.69L446.73,62.72" stroke="#4848ff" stroke-width="1.2" fill="none"/>
<text x="453.3" y="75.1" text-anchor="middle" font-family="Liberation Sans,sans-serif" font-size="11" fill="#5c5cff">300</text>
<text x="479.5" y="87.4" text-anchor="middle" font-family="Liberation Sans,sans-serif" font-size="11" fill="#5c5cff">45</text>
<text x="488.3" y="113.6" text-anchor="middle" font-family="Liberation Sans,sans-serif" font-size="11" fill="#5c5cff">90</text>
<text x="480.2" y="140.5" text-anchor="middle" font-family="Liberation Sans,sans-serif" font-size="11" fill="#5c5cff">135</text>
<text x="453.3" y="149.6" text-anchor="middle" font-family="Liberation Sans,sans-serif" font-size="11" fill="#5c5cff">180</text>
<text x="425.7" y="141.2" text-anchor="middle" font-family="Liberation Sans,sans-serif" font-size="11" fill="#5c5cff">225</text>
<text x="417.3" y="113.6" text-anchor="middle" font-family="Liberation Sans,sans-serif" font-size="11" fill="#5c5cff">270</text>
<text x="425.7" y="86.0" text-anchor="middle" font-family="Liberation Sans,sans-serif" font-size="11" fill="#5c5cff">315</text>
<line x1="454.6" y1="112.4" x2="414.8" y2="125.7" stroke="#60d860" stroke-width="1.2"/>
<polygon points="414.1,126.8 415.4,130.2 474.3,107.7 472.0,102.1" fill="#ff5050"/>
<rect x="413.2" y="127.0" width="3" height="3" fill="#40d040"/>
<circle cx="455.0" cy="112.4" r="10.8" fill="#77797c"/><circle cx="455.0" cy="112.4" r="8.4" fill="url(#hb)"/>
</svg>
<svg width="1280" height="717" viewBox="0 0 1280 717">
<defs>
<radialGradient id="sky" cx="0.5" cy="0.5" r="0.5" fx="0.52" fy="0.68"><stop offset="0" stop-color="#3b678c"/><stop offset="0.35" stop-color="#2d5a82"/><stop offset="0.62" stop-color="#1e4870"/><stop offset="0.8" stop-color="#123252"/><stop offset="0.92" stop-color="#07182a"/><stop offset="1" stop-color="#000"/></radialGradient>
<radialGradient id="mn" cx="0.42" cy="0.45" r="0.62"><stop offset="0" stop-color="#8f8b90"/><stop offset="0.7" stop-color="#a4a4a8"/><stop offset="0.92" stop-color="#c8c8cc"/><stop offset="1" stop-color="#f0f0f4"/></radialGradient>
<clipPath id="mc"><rect x="322.5" y="499" width="200.5" height="113.5"/></clipPath>
</defs>
<rect x="322" y="499" width="201.5" height="114" fill="#000"/>
<g clip-path="url(#mc)">
<ellipse cx="423" cy="556" rx="104" ry="68" fill="url(#sky)"/>
<ellipse cx="462.6" cy="530.2" rx="16.8" ry="14.2" fill="#f6f6fa"/>
<ellipse cx="460.2" cy="528.2" rx="15.6" ry="13.4" fill="url(#mn)"/>
<rect x="352.5" y="583" width="2.4" height="2" fill="#9cc0e0"/>
<circle cx="405" cy="611" r="5" fill="#050a10"/>
<circle cx="412" cy="609" r="5" fill="#050a10"/>
<circle cx="419" cy="607" r="5" fill="#050a10"/>
<circle cx="425" cy="606" r="4.5" fill="#050a10"/>
<circle cx="431" cy="604" r="5" fill="#050a10"/>
<circle cx="437" cy="600" r="5" fill="#050a10"/>
<circle cx="441" cy="596" r="4.5" fill="#050a10"/>
<circle cx="444" cy="599" r="5" fill="#050a10"/>
<circle cx="449" cy="603" r="5" fill="#050a10"/>
<circle cx="455" cy="607" r="4" fill="#050a10"/>
<circle cx="462" cy="609" r="4" fill="#050a10"/>
<circle cx="470" cy="610" r="3.5" fill="#050a10"/>
<circle cx="478" cy="608" r="4" fill="#050a10"/>
<circle cx="485" cy="607" r="4" fill="#050a10"/>
<circle cx="492" cy="608" r="4" fill="#050a10"/>
<circle cx="499" cy="610" r="3.5" fill="#050a10"/>
<circle cx="506" cy="611" r="3" fill="#050a10"/>
<path d="M350,613.5 L385,610 400,611 405,608 425,604 437,597 441,593 446,597 455,605 470,608 492,606 508,610 520,611 522,614 350,614Z" fill="#050a10"/>
</g>
<rect x="322" y="499" width="1" height="114" fill="#6c6c6c"/>
<rect x="467" y="613" width="57" height="1" fill="#6c6c6c"/><rect x="523" y="499" width="1" height="115" fill="#444"/>
</svg>
<div class="led" style="left:254.1px;top:315.9px"></div><div class="led" style="left:254.1px;top:347.0px"></div><div class="led" style="left:254.1px;top:378.5px"></div><div class="led" style="left:254.1px;top:410.5px"></div><div class="led" style="left:254.1px;top:441.5px"></div><div class="led" style="left:124.9px;top:472.2px"></div><div style="position:absolute;left:500px;top:669px;width:13px;height:13px;border-radius:50%;background:radial-gradient(circle at 35% 30%,#ffb0b0 0,#ff2020 25%,#ee0000 70%,#c00000 100%)"></div>
<div class="t" style="left:6.80px;top:-0.10px;font-family:'DejaVu Sans','Liberation Sans',sans-serif;font-weight:bold;font-size:10.55px;line-height:14px;color:#ffff00;transform:scaleX(0.9222)">Current&nbsp;Conditions,&nbsp;WD&nbsp;10.37S104</div>
<div class="t" style="left:5.65px;top:291.80px;font-family:'DejaVu Sans','Liberation Sans',sans-serif;font-weight:bold;font-size:10.55px;line-height:14px;color:#ffff00;transform:scaleX(0.9530)">Extreme&nbsp;Conditions</div>
<div class="t" style="left:433.20px;top:291.90px;font-family:'DejaVu Sans','Liberation Sans',sans-serif;font-weight:bold;font-size:10.55px;line-height:14px;color:#ffff00;transform:scaleX(0.9348)">At&nbsp;Time</div>
<div class="t" style="left:5.65px;top:498.70px;font-family:'DejaVu Sans','Liberation Sans',sans-serif;font-weight:bold;font-size:10.55px;line-height:14px;color:#ffff00;transform:scaleX(0.9500)">Rainfall</div>
<div class="t" style="left:5.30px;top:13.90px;font-family:'Liberation Sans',sans-serif;font-weight:normal;font-size:13.62px;text-shadow:0.45px 0 0 currentColor;line-height:18px;color:#ffffff;transform:scaleX(1.1392)">Average</div>
<div class="t" style="left:5.30px;top:28.40px;font-family:'Liberation Sans',sans-serif;font-weight:normal;font-size:13.62px;text-shadow:0.45px 0 0 currentColor;line-height:18px;color:#ffffff;transform:scaleX(1.1311)">Wind&nbsp;Speed</div>
<div class="t" style="left:3.80px;top:42.70px;font-family:'Liberation Sans',sans-serif;font-weight:normal;font-size:13.62px;text-shadow:0.45px 0 0 currentColor;line-height:18px;color:#ffffff;transform:scaleX(1.0478)">Current</div>
<div class="t" style="left:3.40px;top:56.70px;font-family:'Liberation Sans',sans-serif;font-weight:normal;font-size:13.62px;text-shadow:0.45px 0 0 currentColor;line-height:18px;color:#ffffff;transform:scaleX(1.1297)">Wind&nbsp;Speed</div>
<div class="t" style="left:4.00px;top:74.50px;font-family:'Liberation Sans',sans-serif;font-weight:normal;font-size:13.62px;text-shadow:0.45px 0 0 currentColor;line-height:18px;color:#ffffff;transform:scaleX(1.1338)">Temperature</div>
<div class="t" style="left:4.00px;top:99.60px;font-family:'Liberation Sans',sans-serif;font-weight:normal;font-size:13.62px;text-shadow:0.45px 0 0 currentColor;line-height:18px;color:#ffffff;transform:scaleX(1.1364)">Temp&nbsp;Rate</div>
<div class="t" style="left:4.78px;top:125.50px;font-family:'Liberation Sans',sans-serif;font-weight:normal;font-size:13.62px;text-shadow:0.45px 0 0 currentColor;line-height:18px;color:#ffffff;transform:scaleX(1.1222)">Barometer</div>
<div class="t" style="left:4.78px;top:147.80px;font-family:'Liberation Sans',sans-serif;font-weight:normal;font-size:13.62px;text-shadow:0.45px 0 0 currentColor;line-height:18px;color:#ffffff;transform:scaleX(1.1204)">Pressure</div>
<div class="t" style="left:4.78px;top:163.40px;font-family:'Liberation Sans',sans-serif;font-weight:normal;font-size:13.62px;text-shadow:0.45px 0 0 currentColor;line-height:18px;color:#ffffff;transform:scaleX(1.1179)">Rate</div>
<div class="t" style="left:4.79px;top:185.70px;font-family:'Liberation Sans',sans-serif;font-weight:normal;font-size:13.62px;text-shadow:0.45px 0 0 currentColor;line-height:18px;color:#ffffff;transform:scaleX(1.1057)">Humidity</div>
<div class="t" style="left:4.78px;top:211.80px;font-family:'Liberation Sans',sans-serif;font-weight:normal;font-size:13.62px;text-shadow:0.45px 0 0 currentColor;line-height:18px;color:#ffffff;transform:scaleX(1.1203)">Dew&nbsp;Pt&nbsp;Depr.</div>
<div class="t" style="left:5.44px;top:238.60px;font-family:'Liberation Sans',sans-serif;font-weight:normal;font-size:13.62px;text-shadow:0.45px 0 0 currentColor;line-height:18px;color:#ffffff;transform:scaleX(1.1615)">Indoor&nbsp;Temp.</div>
<div class="t" style="left:5.48px;top:263.50px;font-family:'Liberation Sans',sans-serif;font-weight:normal;font-size:13.62px;text-shadow:0.45px 0 0 currentColor;line-height:18px;color:#ffffff;transform:scaleX(1.1178)">Indoor&nbsp;Hum.</div>
<div class="t" style="left:251.30px;top:210.70px;font-family:'Liberation Sans',sans-serif;font-weight:normal;font-size:13.62px;text-shadow:0.45px 0 0 currentColor;line-height:18px;color:#ffffff;transform:scaleX(1.1448)">Wind&nbsp;chill</div>
<div class="t" style="left:250.69px;top:236.70px;font-family:'Liberation Sans',sans-serif;font-weight:normal;font-size:13.62px;text-shadow:0.45px 0 0 currentColor;line-height:18px;color:#ffffff;transform:scaleX(1.1065)">Dew&nbsp;Point</div>
<div class="t" style="left:253.00px;top:262.80px;font-family:'Liberation Sans',sans-serif;font-weight:normal;font-size:13.62px;text-shadow:0.45px 0 0 currentColor;line-height:18px;color:#ffffff;transform:scaleX(1.1145)">Wet&nbsp;Bulb</div>
<div class="t" style="left:2.98px;top:312.80px;font-family:'Liberation Sans',sans-serif;font-weight:normal;font-size:13.62px;text-shadow:0.45px 0 0 currentColor;line-height:18px;color:#ffffff;transform:scaleX(1.1214)">Maximum&nbsp;Gust&nbsp;Today</div>
<div class="t" style="left:3.01px;top:343.80px;font-family:'Liberation Sans',sans-serif;font-weight:normal;font-size:13.62px;text-shadow:0.45px 0 0 currentColor;line-height:18px;color:#ffffff;transform:scaleX(1.0883)">Maximum&nbsp;Gust&nbsp;Last&nbsp;Hour</div>
<div class="t" style="left:2.98px;top:374.90px;font-family:'Liberation Sans',sans-serif;font-weight:normal;font-size:13.62px;text-shadow:0.45px 0 0 currentColor;line-height:18px;color:#ffffff;transform:scaleX(1.1179)">Maximum&nbsp;Average</div>
<div class="t" style="left:2.98px;top:406.00px;font-family:'Liberation Sans',sans-serif;font-weight:normal;font-size:13.62px;text-shadow:0.45px 0 0 currentColor;line-height:18px;color:#ffffff;transform:scaleX(1.1225)">Maximum&nbsp;Temperature</div>
<div class="t" style="left:2.98px;top:437.80px;font-family:'Liberation Sans',sans-serif;font-weight:normal;font-size:13.62px;text-shadow:0.45px 0 0 currentColor;line-height:18px;color:#ffffff;transform:scaleX(1.1200)">Minimum&nbsp;Temperature</div>
<div class="t" style="left:16.82px;top:459.60px;font-family:'Liberation Sans',sans-serif;font-weight:normal;font-size:13.62px;text-shadow:0.45px 0 0 currentColor;line-height:18px;color:#ffffff;transform:scaleX(1.0776)">Maximum</div>
<div class="t" style="left:15.88px;top:474.50px;font-family:'Liberation Sans',sans-serif;font-weight:normal;font-size:13.62px;text-shadow:0.45px 0 0 currentColor;line-height:18px;color:#ffffff;transform:scaleX(1.1200)">Rain&nbsp;Rate</div>
<div class="t" style="left:4.50px;top:520.60px;font-family:'Liberation Sans',sans-serif;font-weight:normal;font-size:13.62px;text-shadow:0.45px 0 0 currentColor;line-height:18px;color:#ffffff;transform:scaleX(1.1017)">Last&nbsp;Hour</div>
<div class="t" style="left:4.00px;top:549.50px;font-family:'Liberation Sans',sans-serif;font-weight:normal;font-size:13.62px;text-shadow:0.45px 0 0 currentColor;line-height:18px;color:#ffffff;transform:scaleX(1.1784)">Today</div>
<div class="t" style="left:5.70px;top:578.00px;font-family:'Liberation Sans',sans-serif;font-weight:normal;font-size:13.62px;text-shadow:0.45px 0 0 currentColor;line-height:18px;color:#ffffff;transform:scaleX(1.1525)">Yesterday</div>
<div class="t" style="left:4.57px;top:606.80px;font-family:'Liberation Sans',sans-serif;font-weight:normal;font-size:13.62px;text-shadow:0.45px 0 0 currentColor;line-height:18px;color:#ffffff;transform:scaleX(1.1307)">Month&nbsp;To&nbsp;Date</div>
<div class="t" style="left:5.70px;top:634.70px;font-family:'Liberation Sans',sans-serif;font-weight:normal;font-size:13.62px;text-shadow:0.45px 0 0 currentColor;line-height:18px;color:#ffffff;transform:scaleX(1.1756)">Year&nbsp;To&nbsp;Date</div>
<div class="t" style="left:5.88px;top:653.50px;font-family:'Liberation Sans',sans-serif;font-weight:normal;font-size:13.62px;text-shadow:0.45px 0 0 currentColor;line-height:18px;color:#ffffff;transform:scaleX(1.1200)">Rain&nbsp;Rate</div>
<div class="t" style="left:128.47px;top:16.00px;font-family:'Liberation Sans',sans-serif;font-weight:normal;font-size:17.39px;line-height:22px;color:#00ff00;transform:scaleX(1.0317)">6.1&nbsp;kmh</div>
<div class="t" style="left:129.28px;top:42.90px;font-family:'Liberation Sans',sans-serif;font-weight:normal;font-size:17.39px;line-height:22px;color:#00ff00;transform:scaleX(1.0183)">7.2&nbsp;kmh</div>
<div class="t" style="left:129.77px;top:69.60px;font-family:'Liberation Sans',sans-serif;font-weight:normal;font-size:17.39px;line-height:22px;color:#ff0000;transform:scaleX(1.0273)">11.0&nbsp;°C</div>
<div class="t" style="left:120.00px;top:97.50px;font-family:'Liberation Sans',sans-serif;font-weight:normal;font-size:17.39px;line-height:22px;color:#00ff00;transform:scaleX(0.9865)">0.0&nbsp;°C&nbsp;/hr</div>
<div class="t" style="left:118.77px;top:124.80px;font-family:'Liberation Sans',sans-serif;font-weight:normal;font-size:17.39px;line-height:22px;color:#00ff00;transform:scaleX(1.0282)">953.5&nbsp;hPa</div>
<div class="t" style="left:125.40px;top:180.50px;font-family:'Liberation Sans',sans-serif;font-weight:normal;font-size:17.39px;line-height:22px;color:#00ff00;transform:scaleX(0.9974)">76&nbsp;%</div>
<div class="t" style="left:125.88px;top:207.60px;font-family:'Liberation Sans',sans-serif;font-weight:normal;font-size:17.39px;line-height:22px;color:#00ff00;transform:scaleX(1.0200)">11.0&nbsp;°C</div>
<div class="t" style="left:124.68px;top:235.30px;font-family:'Liberation Sans',sans-serif;font-weight:normal;font-size:17.39px;line-height:22px;color:#00ff00;transform:scaleX(1.0232)">21.1&nbsp;°C</div>
<div class="t" style="left:126.40px;top:261.40px;font-family:'Liberation Sans',sans-serif;font-weight:normal;font-size:17.39px;line-height:22px;color:#00ff00;transform:scaleX(0.9718)">43&nbsp;%</div>
<div class="t" style="left:387.30px;top:176.80px;font-family:'Liberation Sans',sans-serif;font-weight:normal;font-size:17.39px;line-height:22px;color:#00ff00;transform:scaleX(1.0000)">WSW&nbsp;&nbsp;248&nbsp;°</div>
<div class="t" style="left:389.67px;top:206.70px;font-family:'Liberation Sans',sans-serif;font-weight:normal;font-size:17.39px;line-height:22px;color:#00ff00;transform:scaleX(1.0291)">11.0&nbsp;°C</div>
<div class="t" style="left:389.50px;top:233.90px;font-family:'Liberation Sans',sans-serif;font-weight:normal;font-size:17.39px;line-height:22px;color:#00ff00;transform:scaleX(0.9896)">0.0&nbsp;°C</div>
<div class="t" style="left:388.49px;top:261.30px;font-family:'Liberation Sans',sans-serif;font-weight:normal;font-size:17.39px;line-height:22px;color:#00ff00;transform:scaleX(1.0106)">6.5&nbsp;°C</div>
<div class="t" style="left:275.98px;top:403.90px;font-family:'Liberation Sans',sans-serif;font-weight:normal;font-size:17.39px;line-height:22px;color:#ff0000;transform:scaleX(1.0182)">11.0&nbsp;°C</div>
<div class="t" style="left:185.00px;top:516.60px;font-family:'Liberation Sans',sans-serif;font-weight:normal;font-size:17.39px;line-height:22px;color:#00ff00;transform:scaleX(0.9930)">0.0&nbsp;mm</div>
<div class="t" style="left:185.00px;top:546.00px;font-family:'Liberation Sans',sans-serif;font-weight:normal;font-size:17.39px;line-height:22px;color:#00ff00;transform:scaleX(0.9930)">0.0&nbsp;mm</div>
<div class="t" style="left:185.00px;top:574.70px;font-family:'Liberation Sans',sans-serif;font-weight:normal;font-size:17.39px;line-height:22px;color:#00ff00;transform:scaleX(0.9930)">0.0&nbsp;mm</div>
<div class="t" style="left:185.00px;top:604.90px;font-family:'Liberation Sans',sans-serif;font-weight:normal;font-size:17.39px;line-height:22px;color:#00ff00;transform:scaleX(0.9930)">0.0&nbsp;mm</div>
<div class="t" style="left:183.78px;top:633.70px;font-family:'Liberation Sans',sans-serif;font-weight:normal;font-size:17.39px;line-height:22px;color:#00ff00;transform:scaleX(1.0187)">585.6&nbsp;mm</div>
<div class="t" style="left:9.00px;top:668.00px;font-family:'Liberation Sans',sans-serif;font-weight:normal;font-size:17.39px;line-height:22px;color:#00ff00;transform:scaleX(1.0074)">0.00&nbsp;mm/min&nbsp;(0.00&nbsp;mm/hr)</div>
<div class="c" style="left:0;top:435.00px;width:324.2px;height:22px"><div class="t" style="left:275.98px;top:0;font-family:'Liberation Sans',sans-serif;font-weight:normal;font-size:17.39px;line-height:22px;color:#00ff00;transform:scaleX(1.0182)">11.0&nbsp;°C</div></div>
<div class="c" style="left:0;top:464.90px;width:150.8px;height:22px"><div class="t" style="left:146.00px;top:0;font-family:'Liberation Sans',sans-serif;font-weight:normal;font-size:17.39px;line-height:22px;color:#00ff00;transform:scaleX(0.8846)">0.0&nbsp;mm/hr</div></div>
<div class="c" style="left:0;top:155.00px;width:187.5px;height:17px"><div class="t" style="left:117.00px;top:0;font-family:'Liberation Sans',sans-serif;font-weight:bold;font-size:13.33px;line-height:17px;color:#00ff00;transform:scaleX(1.0956)">+0.6hPa/hr</div></div>
<div class="t" style="left:274.98px;top:310.90px;font-family:'Liberation Sans',sans-serif;font-weight:bold;font-size:13.77px;line-height:18px;color:#ff0000;transform:scaleX(1.0157)">17.3&nbsp;kmh&nbsp;SSE</div>
<div class="t" style="left:274.98px;top:342.50px;font-family:'Liberation Sans',sans-serif;font-weight:bold;font-size:13.77px;line-height:18px;color:#00ff00;transform:scaleX(1.0157)">17.3&nbsp;kmh&nbsp;SSE</div>
<div class="c" style="left:0;top:373.60px;width:330.8px;height:18px"><div class="t" style="left:274.97px;top:0;font-family:'Liberation Sans',sans-serif;font-weight:bold;font-size:13.77px;line-height:18px;color:#00ff00;transform:scaleX(1.0263)">13.3&nbsp;kmh</div></div>
<div class="t" style="left:432.90px;top:310.70px;font-family:'Liberation Sans',sans-serif;font-weight:bold;font-size:13.77px;line-height:18px;color:#ff0000;transform:scaleX(0.9743)">06:03</div>
<div class="t" style="left:432.90px;top:342.70px;font-family:'Liberation Sans',sans-serif;font-weight:bold;font-size:13.77px;line-height:18px;color:#00ff00;transform:scaleX(0.9743)">06:03</div>
<div class="c" style="left:0;top:373.30px;width:437.3px;height:18px"><div class="t" style="left:432.90px;top:0;font-family:'Liberation Sans',sans-serif;font-weight:bold;font-size:13.77px;line-height:18px;color:#00ff00;transform:scaleX(0.9743)">06:03</div></div>
<div class="c" style="left:0;top:436.00px;width:437.3px;height:18px"><div class="t" style="left:432.90px;top:0;font-family:'Liberation Sans',sans-serif;font-weight:bold;font-size:13.77px;line-height:18px;color:#00ff00;transform:scaleX(0.9743)">06:03</div></div>
<div class="c" style="left:0;top:466.30px;width:437.3px;height:18px"><div class="t" style="left:432.90px;top:0;font-family:'Liberation Sans',sans-serif;font-weight:bold;font-size:13.77px;line-height:18px;color:#00ff00;transform:scaleX(0.9743)">06:03</div></div>
<div class="t" style="left:349.50px;top:636.50px;font-family:'Liberation Sans',sans-serif;font-weight:bold;font-size:13.62px;line-height:18px;color:#00ff00;transform:scaleX(1.0093)">06:50:07</div>
<div class="t" style="left:191.30px;top:293.60px;font-family:'Liberation Sans',sans-serif;font-weight:normal;font-size:12.46px;line-height:16px;color:#ffffff;transform:scaleX(1.0467)">Values&nbsp;reset&nbsp;at&nbsp;0&nbsp;hr</div>
<div class="t" style="left:88.97px;top:500.50px;font-family:'Liberation Sans',sans-serif;font-weight:normal;font-size:12.46px;line-height:16px;color:#ffffff;transform:scaleX(1.0284)">Rain&nbsp;reset&nbsp;at&nbsp;0&nbsp;hr</div>
<div class="t" style="left:499.00px;top:239.60px;font-family:'Liberation Sans',sans-serif;font-weight:normal;font-size:10.43px;line-height:14px;color:#ffffff;transform:scaleX(1.0357)">0,0</div>
<div class="t" style="left:295.70px;top:562.60px;font-family:'Liberation Sans',sans-serif;font-weight:normal;font-size:10.43px;line-height:14px;color:#ffffff;transform:scaleX(1.0643)">0,0</div>
<div class="t" style="left:350.54px;top:611.60px;font-family:'DejaVu Sans','Liberation Sans',sans-serif;font-weight:bold;font-size:21.10px;line-height:27px;color:#00ff00;transform:scaleX(0.9800)">1/12/2021</div>
<div class="t" style="left:341.80px;top:661.50px;font-family:'Liberation Serif',serif;font-weight:normal;font-size:12.42px;text-shadow:0.35px 0 0 currentColor;line-height:16px;color:#ffffff;transform:scaleX(0.8411)">Data&nbsp;Received</div>
<div class="t" style="left:442.58px;top:660.70px;font-family:'Liberation Serif',serif;font-weight:normal;font-size:12.58px;text-shadow:0.35px 0 0 currentColor;line-height:16px;color:#ffffff;transform:scaleX(0.8167)">579</div>
<div class="t" style="left:443.90px;top:677.40px;font-family:'Liberation Serif',serif;font-weight:normal;font-size:12.58px;text-shadow:0.35px 0 0 currentColor;line-height:16px;color:#ff0000;transform:scaleX(0.6833)">0</div>
<div class="t" style="left:487.40px;top:683.70px;font-family:'Liberation Serif',serif;font-weight:normal;font-size:12.58px;text-shadow:0.35px 0 0 currentColor;line-height:16px;color:#ffffff;transform:scaleX(0.8094)">Alarm</div>
<div class="t" style="left:533.60px;top:2.00px;font-family:'Liberation Sans',sans-serif;font-weight:normal;font-size:12.17px;text-shadow:0.3px 0 0 currentColor;line-height:16px;color:#ffffff;transform:scaleX(0.7186)">Gustspeed</div>
<div class="t" style="left:652.80px;top:2.00px;font-family:'Liberation Sans',sans-serif;font-weight:normal;font-size:12.17px;text-shadow:0.3px 0 0 currentColor;line-height:16px;color:#ffffff;transform:scaleX(0.7326)">7.4&nbsp;kmh</div>
<div class="t" style="left:706.30px;top:2.00px;font-family:'Liberation Serif',serif;font-weight:normal;font-size:12.73px;text-shadow:0.35px 0 0 currentColor;line-height:16px;color:#00ff00;transform:scaleX(0.7818)">Avspd</div>
<div class="t" style="left:772.80px;top:2.00px;font-family:'Liberation Sans',sans-serif;font-weight:normal;font-size:12.17px;text-shadow:0.3px 0 0 currentColor;line-height:16px;color:#00ff00;transform:scaleX(0.7279)">5.6&nbsp;kmh</div>
<div class="t" style="left:824.40px;top:0.60px;font-family:'Liberation Sans',sans-serif;font-weight:normal;font-size:11.88px;text-shadow:0.3px 0 0 currentColor;line-height:15px;color:#ffff00;transform:scaleX(0.7367)">06:50</div>
<div class="t" style="left:1030.00px;top:2.00px;font-family:'Liberation Serif',serif;font-weight:normal;font-size:12.73px;text-shadow:0.35px 0 0 currentColor;line-height:16px;color:#ff00ff;transform:scaleX(0.8407)">Barometer</div>
<div class="t" style="left:1140.70px;top:2.50px;font-family:'Liberation Sans',sans-serif;font-weight:normal;font-size:11.88px;text-shadow:0.3px 0 0 currentColor;line-height:15px;color:#ff00ff;transform:scaleX(0.7236)">953.5&nbsp;hPa</div>
<div class="t" style="left:530.00px;top:404.70px;font-family:'Liberation Serif',serif;font-weight:normal;font-size:12.42px;text-shadow:0.35px 0 0 currentColor;line-height:16px;color:#ff0000;transform:scaleX(0.7575)">Rainfall</div>
<div class="t" style="left:594.60px;top:405.70px;font-family:'Liberation Sans',sans-serif;font-weight:normal;font-size:11.88px;text-shadow:0.3px 0 0 currentColor;line-height:15px;color:#ff0000;transform:scaleX(0.7300)">0.0&nbsp;mm</div>
<div class="c" style="left:0;top:402.3px;width:1280px;height:30px"><div class="t" style="left:642.60px;top:-4.30px;font-family:'Liberation Serif',serif;font-weight:normal;font-size:12.42px;text-shadow:0.35px 0 0 currentColor;line-height:16px;color:#8888ff;transform:scaleX(0.7583)">Humidity</div></div>
<div class="c" style="left:0;top:402.3px;width:1280px;height:30px"><div class="t" style="left:721.80px;top:-3.30px;font-family:'Liberation Sans',sans-serif;font-weight:normal;font-size:11.88px;text-shadow:0.3px 0 0 currentColor;line-height:15px;color:#8888ff;transform:scaleX(0.7667)">73&nbsp;%</div></div>
<div class="c" style="left:0;top:402.3px;width:1280px;height:30px"><div class="t" style="left:1008.30px;top:-3.80px;font-family:'Liberation Serif',serif;font-weight:normal;font-size:12.42px;text-shadow:0.35px 0 0 currentColor;line-height:16px;color:#00ff00;transform:scaleX(0.8524)">Temperature</div></div>
<div class="c" style="left:0;top:402.3px;width:1280px;height:30px"><div class="t" style="left:1105.68px;top:-2.60px;font-family:'Liberation Sans',sans-serif;font-weight:normal;font-size:11.88px;text-shadow:0.3px 0 0 currentColor;line-height:15px;color:#00ff00;transform:scaleX(0.7158)">11.0&nbsp;°C</div></div>
<div class="t" style="left:1157.00px;top:405.20px;font-family:'Liberation Serif',serif;font-weight:normal;font-size:12.73px;text-shadow:0.35px 0 0 currentColor;line-height:16px;color:#ff00ff;transform:scaleX(0.7963)">Dew&nbsp;Point</div>
<div class="t" style="left:1229.60px;top:405.80px;font-family:'Liberation Sans',sans-serif;font-weight:normal;font-size:11.88px;text-shadow:0.3px 0 0 currentColor;line-height:15px;color:#ff00ff;transform:scaleX(0.7200)">6.3°C</div>
<div class="t" style="left:1214.30px;top:307.70px;font-family:'Liberation Serif',serif;font-weight:normal;font-size:11.52px;text-shadow:0.35px 0 0 currentColor;line-height:15px;color:#ffff00;transform:scaleX(0.7875)">N</div>
<div class="t" style="left:1214.30px;top:327.50px;font-family:'Liberation Serif',serif;font-weight:normal;font-size:11.82px;text-shadow:0.35px 0 0 currentColor;line-height:15px;color:#ffff00;transform:scaleX(0.7909)">W</div>
<div class="t" style="left:1213.75px;top:345.70px;font-family:'Liberation Serif',serif;font-weight:normal;font-size:12.42px;text-shadow:0.35px 0 0 currentColor;line-height:16px;color:#ffff00;transform:scaleX(0.7500)">S</div>
<div class="t" style="left:1214.30px;top:366.80px;font-family:'Liberation Serif',serif;font-weight:normal;font-size:11.82px;text-shadow:0.35px 0 0 currentColor;line-height:15px;color:#ffff00;transform:scaleX(0.8143)">E</div>
<div class="t" style="left:1214.30px;top:386.50px;font-family:'Liberation Serif',serif;font-weight:normal;font-size:11.82px;text-shadow:0.35px 0 0 currentColor;line-height:15px;color:#ffff00;transform:scaleX(0.7000)">N</div>
<div class="t" style="left:1233.00px;top:347.50px;font-family:'Liberation Sans',sans-serif;font-weight:normal;font-size:11.88px;text-shadow:0.3px 0 0 currentColor;line-height:15px;color:#ffff00;transform:scaleX(0.7200)">248</div>
<div class="t" style="left:565.10px;top:14.35px;font-family:'Liberation Sans',sans-serif;font-weight:normal;font-size:9.13px;text-shadow:0.3px 0 0 currentColor;line-height:12px;color:#f4f4ff;transform:scaleX(0.9100)">50</div>
<div class="t" style="left:565.10px;top:41.43px;font-family:'Liberation Sans',sans-serif;font-weight:normal;font-size:9.13px;text-shadow:0.3px 0 0 currentColor;line-height:12px;color:#f4f4ff;transform:scaleX(0.9100)">45</div>
<div class="t" style="left:565.10px;top:68.51px;font-family:'Liberation Sans',sans-serif;font-weight:normal;font-size:9.13px;text-shadow:0.3px 0 0 currentColor;line-height:12px;color:#f4f4ff;transform:scaleX(0.9100)">40</div>
<div class="t" style="left:565.10px;top:95.59px;font-family:'Liberation Sans',sans-serif;font-weight:normal;font-size:9.13px;text-shadow:0.3px 0 0 currentColor;line-height:12px;color:#f4f4ff;transform:scaleX(0.9100)">35</div>
<div class="t" style="left:565.10px;top:122.67px;font-family:'Liberation Sans',sans-serif;font-weight:normal;font-size:9.13px;text-shadow:0.3px 0 0 currentColor;line-height:12px;color:#f4f4ff;transform:scaleX(0.9100)">30</div>
<div class="t" style="left:565.10px;top:149.75px;font-family:'Liberation Sans',sans-serif;font-weight:normal;font-size:9.13px;text-shadow:0.3px 0 0 currentColor;line-height:12px;color:#f4f4ff;transform:scaleX(0.9100)">25</div>
<div class="t" style="left:565.10px;top:176.83px;font-family:'Liberation Sans',sans-serif;font-weight:normal;font-size:9.13px;text-shadow:0.3px 0 0 currentColor;line-height:12px;color:#f4f4ff;transform:scaleX(0.9100)">20</div>
<div class="t" style="left:565.10px;top:203.91px;font-family:'Liberation Sans',sans-serif;font-weight:normal;font-size:9.13px;text-shadow:0.3px 0 0 currentColor;line-height:12px;color:#f4f4ff;transform:scaleX(0.9100)">15</div>
<div class="t" style="left:565.10px;top:230.99px;font-family:'Liberation Sans',sans-serif;font-weight:normal;font-size:9.13px;text-shadow:0.3px 0 0 currentColor;line-height:12px;color:#f4f4ff;transform:scaleX(0.9100)">10</div>
<div class="t" style="left:570.10px;top:258.07px;font-family:'Liberation Sans',sans-serif;font-weight:normal;font-size:9.13px;text-shadow:0.3px 0 0 currentColor;line-height:12px;color:#f4f4ff;transform:scaleX(0.8200)">5</div>
<div class="t" style="left:1197.80px;top:28.45px;font-family:'Liberation Sans',sans-serif;font-weight:normal;font-size:9.13px;text-shadow:0.3px 0 0 currentColor;line-height:12px;color:#ff00ff;transform:scaleX(0.8812)">980</div>
<div class="t" style="left:1197.80px;top:55.42px;font-family:'Liberation Sans',sans-serif;font-weight:normal;font-size:9.13px;text-shadow:0.3px 0 0 currentColor;line-height:12px;color:#ff00ff;transform:scaleX(0.8812)">975</div>
<div class="t" style="left:1197.80px;top:82.39px;font-family:'Liberation Sans',sans-serif;font-weight:normal;font-size:9.13px;text-shadow:0.3px 0 0 currentColor;line-height:12px;color:#ff00ff;transform:scaleX(0.8812)">970</div>
<div class="t" style="left:1197.80px;top:109.36px;font-family:'Liberation Sans',sans-serif;font-weight:normal;font-size:9.13px;text-shadow:0.3px 0 0 currentColor;line-height:12px;color:#ff00ff;transform:scaleX(0.8812)">965</div>
<div class="t" style="left:1197.80px;top:136.33px;font-family:'Liberation Sans',sans-serif;font-weight:normal;font-size:9.13px;text-shadow:0.3px 0 0 currentColor;line-height:12px;color:#ff00ff;transform:scaleX(0.8812)">960</div>
<div class="t" style="left:1197.80px;top:163.30px;font-family:'Liberation Sans',sans-serif;font-weight:normal;font-size:9.13px;text-shadow:0.3px 0 0 currentColor;line-height:12px;color:#ff00ff;transform:scaleX(0.8812)">955</div>
<div class="t" style="left:1197.80px;top:190.27px;font-family:'Liberation Sans',sans-serif;font-weight:normal;font-size:9.13px;text-shadow:0.3px 0 0 currentColor;line-height:12px;color:#ff00ff;transform:scaleX(0.8812)">950</div>
<div class="t" style="left:1197.80px;top:217.24px;font-family:'Liberation Sans',sans-serif;font-weight:normal;font-size:9.13px;text-shadow:0.3px 0 0 currentColor;line-height:12px;color:#ff00ff;transform:scaleX(0.8812)">945</div>
<div class="t" style="left:1197.80px;top:244.21px;font-family:'Liberation Sans',sans-serif;font-weight:normal;font-size:9.13px;text-shadow:0.3px 0 0 currentColor;line-height:12px;color:#ff00ff;transform:scaleX(0.8812)">940</div>
<div class="t" style="left:1197.80px;top:271.18px;font-family:'Liberation Sans',sans-serif;font-weight:normal;font-size:9.13px;text-shadow:0.3px 0 0 currentColor;line-height:12px;color:#ff00ff;transform:scaleX(0.8812)">935</div>
<div class="t" style="left:562.60px;top:308.75px;font-family:'Liberation Sans',sans-serif;font-weight:normal;font-size:9.13px;text-shadow:0.3px 0 0 currentColor;line-height:12px;color:#ffff00;transform:scaleX(0.8813)">360</div>
<div class="t" style="left:562.60px;top:330.15px;font-family:'Liberation Sans',sans-serif;font-weight:normal;font-size:9.13px;text-shadow:0.3px 0 0 currentColor;line-height:12px;color:#ffff00;transform:scaleX(0.8813)">270</div>
<div class="t" style="left:562.60px;top:351.55px;font-family:'Liberation Sans',sans-serif;font-weight:normal;font-size:9.13px;text-shadow:0.3px 0 0 currentColor;line-height:12px;color:#ffff00;transform:scaleX(0.8813)">180</div>
<div class="t" style="left:567.60px;top:372.95px;font-family:'Liberation Sans',sans-serif;font-weight:normal;font-size:9.13px;text-shadow:0.3px 0 0 currentColor;line-height:12px;color:#ffff00;transform:scaleX(0.9100)">90</div>
<div class="t" style="left:572.60px;top:394.35px;font-family:'Liberation Sans',sans-serif;font-weight:normal;font-size:9.13px;text-shadow:0.3px 0 0 currentColor;line-height:12px;color:#ffff00;transform:scaleX(0.8200)">0</div>
<div class="t" style="left:534.10px;top:426.15px;font-family:'Liberation Sans',sans-serif;font-weight:normal;font-size:9.13px;text-shadow:0.3px 0 0 currentColor;line-height:12px;color:#7070ff;transform:scaleX(0.8813)">100</div>
<div class="t" style="left:539.10px;top:450.58px;font-family:'Liberation Sans',sans-serif;font-weight:normal;font-size:9.13px;text-shadow:0.3px 0 0 currentColor;line-height:12px;color:#7070ff;transform:scaleX(0.9100)">90</div>
<div class="t" style="left:539.10px;top:475.01px;font-family:'Liberation Sans',sans-serif;font-weight:normal;font-size:9.13px;text-shadow:0.3px 0 0 currentColor;line-height:12px;color:#7070ff;transform:scaleX(0.9100)">80</div>
<div class="t" style="left:539.10px;top:499.44px;font-family:'Liberation Sans',sans-serif;font-weight:normal;font-size:9.13px;text-shadow:0.3px 0 0 currentColor;line-height:12px;color:#7070ff;transform:scaleX(0.9100)">70</div>
<div class="t" style="left:539.10px;top:523.87px;font-family:'Liberation Sans',sans-serif;font-weight:normal;font-size:9.13px;text-shadow:0.3px 0 0 currentColor;line-height:12px;color:#7070ff;transform:scaleX(0.9100)">60</div>
<div class="t" style="left:539.10px;top:548.30px;font-family:'Liberation Sans',sans-serif;font-weight:normal;font-size:9.13px;text-shadow:0.3px 0 0 currentColor;line-height:12px;color:#7070ff;transform:scaleX(0.9100)">50</div>
<div class="t" style="left:539.10px;top:572.73px;font-family:'Liberation Sans',sans-serif;font-weight:normal;font-size:9.13px;text-shadow:0.3px 0 0 currentColor;line-height:12px;color:#7070ff;transform:scaleX(0.9100)">40</div>
<div class="t" style="left:539.10px;top:597.16px;font-family:'Liberation Sans',sans-serif;font-weight:normal;font-size:9.13px;text-shadow:0.3px 0 0 currentColor;line-height:12px;color:#7070ff;transform:scaleX(0.9100)">30</div>
<div class="t" style="left:539.10px;top:621.59px;font-family:'Liberation Sans',sans-serif;font-weight:normal;font-size:9.13px;text-shadow:0.3px 0 0 currentColor;line-height:12px;color:#7070ff;transform:scaleX(0.9100)">20</div>
<div class="t" style="left:539.10px;top:646.02px;font-family:'Liberation Sans',sans-serif;font-weight:normal;font-size:9.13px;text-shadow:0.3px 0 0 currentColor;line-height:12px;color:#7070ff;transform:scaleX(0.9100)">10</div>
<div class="t" style="left:544.10px;top:670.45px;font-family:'Liberation Sans',sans-serif;font-weight:normal;font-size:9.13px;text-shadow:0.3px 0 0 currentColor;line-height:12px;color:#7070ff;transform:scaleX(0.8200)">0</div>
<div class="t" style="left:573.30px;top:426.15px;font-family:'Liberation Sans',sans-serif;font-weight:normal;font-size:9.13px;text-shadow:0.3px 0 0 currentColor;line-height:12px;color:#ff0000;transform:scaleX(0.9100)">30</div>
<div class="t" style="left:573.30px;top:466.92px;font-family:'Liberation Sans',sans-serif;font-weight:normal;font-size:9.13px;text-shadow:0.3px 0 0 currentColor;line-height:12px;color:#ff0000;transform:scaleX(0.9100)">25</div>
<div class="t" style="left:573.30px;top:507.69px;font-family:'Liberation Sans',sans-serif;font-weight:normal;font-size:9.13px;text-shadow:0.3px 0 0 currentColor;line-height:12px;color:#ff0000;transform:scaleX(0.9100)">20</div>
<div class="t" style="left:573.30px;top:548.46px;font-family:'Liberation Sans',sans-serif;font-weight:normal;font-size:9.13px;text-shadow:0.3px 0 0 currentColor;line-height:12px;color:#ff0000;transform:scaleX(0.9100)">15</div>
<div class="t" style="left:573.30px;top:589.23px;font-family:'Liberation Sans',sans-serif;font-weight:normal;font-size:9.13px;text-shadow:0.3px 0 0 currentColor;line-height:12px;color:#ff0000;transform:scaleX(0.9100)">10</div>
<div class="t" style="left:578.30px;top:630.00px;font-family:'Liberation Sans',sans-serif;font-weight:normal;font-size:9.13px;text-shadow:0.3px 0 0 currentColor;line-height:12px;color:#ff0000;transform:scaleX(0.8200)">5</div>
<div class="t" style="left:578.30px;top:670.77px;font-family:'Liberation Sans',sans-serif;font-weight:normal;font-size:9.13px;text-shadow:0.3px 0 0 currentColor;line-height:12px;color:#ff0000;transform:scaleX(0.8200)">0</div>
<div class="t" style="left:1201.00px;top:425.90px;font-family:'Liberation Sans',sans-serif;font-weight:normal;font-size:9.57px;text-shadow:0.3px 0 0 currentColor;line-height:12px;color:#00ff00;transform:scaleX(0.8636)">40</div>
<div class="t" style="left:1201.00px;top:456.58px;font-family:'Liberation Sans',sans-serif;font-weight:normal;font-size:9.57px;text-shadow:0.3px 0 0 currentColor;line-height:12px;color:#00ff00;transform:scaleX(0.8636)">35</div>
<div class="t" style="left:1201.00px;top:487.26px;font-family:'Liberation Sans',sans-serif;font-weight:normal;font-size:9.57px;text-shadow:0.3px 0 0 currentColor;line-height:12px;color:#00ff00;transform:scaleX(0.8636)">30</div>
<div class="t" style="left:1201.00px;top:517.94px;font-family:'Liberation Sans',sans-serif;font-weight:normal;font-size:9.57px;text-shadow:0.3px 0 0 currentColor;line-height:12px;color:#00ff00;transform:scaleX(0.8636)">25</div>
<div class="t" style="left:1201.00px;top:548.62px;font-family:'Liberation Sans',sans-serif;font-weight:normal;font-size:9.57px;text-shadow:0.3px 0 0 currentColor;line-height:12px;color:#00ff00;transform:scaleX(0.8636)">20</div>
<div class="t" style="left:1200.05px;top:579.30px;font-family:'Liberation Sans',sans-serif;font-weight:normal;font-size:9.57px;text-shadow:0.3px 0 0 currentColor;line-height:12px;color:#00ff00;transform:scaleX(0.9500)">15</div>
<div class="t" style="left:1200.05px;top:609.98px;font-family:'Liberation Sans',sans-serif;font-weight:normal;font-size:9.57px;text-shadow:0.3px 0 0 currentColor;line-height:12px;color:#00ff00;transform:scaleX(0.9500)">10</div>
<div class="t" style="left:1201.00px;top:640.66px;font-family:'Liberation Sans',sans-serif;font-weight:normal;font-size:9.57px;text-shadow:0.3px 0 0 currentColor;line-height:12px;color:#00ff00;transform:scaleX(0.8600)">5</div>
<div class="t" style="left:1201.00px;top:671.34px;font-family:'Liberation Sans',sans-serif;font-weight:normal;font-size:9.57px;text-shadow:0.3px 0 0 currentColor;line-height:12px;color:#00ff00;transform:scaleX(0.7167)">0</div>
<div class="t" style="left:604.80px;top:300.00px;font-family:'Liberation Sans',sans-serif;font-weight:normal;font-size:8.55px;text-shadow:0.3px 0 0 currentColor;line-height:11px;color:#ffff00;transform:scaleX(0.8400)">07</div>
<div class="t" style="left:655.80px;top:300.00px;font-family:'Liberation Sans',sans-serif;font-weight:normal;font-size:8.55px;text-shadow:0.3px 0 0 currentColor;line-height:11px;color:#ffff00;transform:scaleX(0.8400)">08</div>
<div class="t" style="left:696.80px;top:300.00px;font-family:'Liberation Sans',sans-serif;font-weight:normal;font-size:8.55px;text-shadow:0.3px 0 0 currentColor;line-height:11px;color:#ffff00;transform:scaleX(0.8400)">20</div>
<div class="t" style="left:743.80px;top:300.00px;font-family:'Liberation Sans',sans-serif;font-weight:normal;font-size:8.55px;text-shadow:0.3px 0 0 currentColor;line-height:11px;color:#ffff00;transform:scaleX(0.8400)">22</div>
<div class="t" style="left:789.80px;top:300.00px;font-family:'Liberation Sans',sans-serif;font-weight:normal;font-size:8.55px;text-shadow:0.3px 0 0 currentColor;line-height:11px;color:#ffff00;transform:scaleX(0.8400)">23</div>
<div class="t" style="left:839.80px;top:300.00px;font-family:'Liberation Sans',sans-serif;font-weight:normal;font-size:8.55px;text-shadow:0.3px 0 0 currentColor;line-height:11px;color:#ffff00;transform:scaleX(0.8400)">00</div>
<div class="t" style="left:889.80px;top:300.00px;font-family:'Liberation Sans',sans-serif;font-weight:normal;font-size:8.55px;text-shadow:0.3px 0 0 currentColor;line-height:11px;color:#ffff00;transform:scaleX(0.8400)">01</div>
<div class="t" style="left:940.80px;top:300.00px;font-family:'Liberation Sans',sans-serif;font-weight:normal;font-size:8.55px;text-shadow:0.3px 0 0 currentColor;line-height:11px;color:#ffff00;transform:scaleX(0.8400)">02</div>
<div class="t" style="left:990.80px;top:300.00px;font-family:'Liberation Sans',sans-serif;font-weight:normal;font-size:8.55px;text-shadow:0.3px 0 0 currentColor;line-height:11px;color:#ffff00;transform:scaleX(0.8400)">03</div>
<div class="t" style="left:1040.80px;top:300.00px;font-family:'Liberation Sans',sans-serif;font-weight:normal;font-size:8.55px;text-shadow:0.3px 0 0 currentColor;line-height:11px;color:#ffff00;transform:scaleX(0.8400)">04</div>
<div class="t" style="left:1091.80px;top:300.00px;font-family:'Liberation Sans',sans-serif;font-weight:normal;font-size:8.55px;text-shadow:0.3px 0 0 currentColor;line-height:11px;color:#ffff00;transform:scaleX(0.8400)">05</div>
<div class="t" style="left:1141.80px;top:300.00px;font-family:'Liberation Sans',sans-serif;font-weight:normal;font-size:8.55px;text-shadow:0.3px 0 0 currentColor;line-height:11px;color:#ffff00;transform:scaleX(0.8400)">06</div>
<div class="t" style="left:613.30px;top:686.20px;font-family:'Liberation Sans',sans-serif;font-weight:normal;font-size:8.55px;text-shadow:0.3px 0 0 currentColor;line-height:11px;color:#ffff00;transform:scaleX(0.8400)">07</div>
<div class="t" style="left:663.60px;top:686.20px;font-family:'Liberation Sans',sans-serif;font-weight:normal;font-size:8.55px;text-shadow:0.3px 0 0 currentColor;line-height:11px;color:#ffff00;transform:scaleX(0.8400)">08</div>
<div class="t" style="left:703.80px;top:686.20px;font-family:'Liberation Sans',sans-serif;font-weight:normal;font-size:8.55px;text-shadow:0.3px 0 0 currentColor;line-height:11px;color:#ffff00;transform:scaleX(0.8400)">20</div>
<div class="t" style="left:750.30px;top:686.20px;font-family:'Liberation Sans',sans-serif;font-weight:normal;font-size:8.55px;text-shadow:0.3px 0 0 currentColor;line-height:11px;color:#ffff00;transform:scaleX(0.8400)">22</div>
<div class="t" style="left:794.80px;top:686.20px;font-family:'Liberation Sans',sans-serif;font-weight:normal;font-size:8.55px;text-shadow:0.3px 0 0 currentColor;line-height:11px;color:#ffff00;transform:scaleX(0.8400)">23</div>
<div class="t" style="left:844.80px;top:686.20px;font-family:'Liberation Sans',sans-serif;font-weight:normal;font-size:8.55px;text-shadow:0.3px 0 0 currentColor;line-height:11px;color:#ffff00;transform:scaleX(0.8400)">00</div>
<div class="t" style="left:894.80px;top:686.20px;font-family:'Liberation Sans',sans-serif;font-weight:normal;font-size:8.55px;text-shadow:0.3px 0 0 currentColor;line-height:11px;color:#ffff00;transform:scaleX(0.8400)">01</div>
<div class="t" style="left:944.30px;top:686.20px;font-family:'Liberation Sans',sans-serif;font-weight:normal;font-size:8.55px;text-shadow:0.3px 0 0 currentColor;line-height:11px;color:#ffff00;transform:scaleX(0.8400)">02</div>
<div class="t" style="left:993.80px;top:686.20px;font-family:'Liberation Sans',sans-serif;font-weight:normal;font-size:8.55px;text-shadow:0.3px 0 0 currentColor;line-height:11px;color:#ffff00;transform:scaleX(0.8400)">03</div>
<div class="t" style="left:1043.80px;top:686.20px;font-family:'Liberation Sans',sans-serif;font-weight:normal;font-size:8.55px;text-shadow:0.3px 0 0 currentColor;line-height:11px;color:#ffff00;transform:scaleX(0.8400)">04</div>
<div class="t" style="left:1093.30px;top:686.20px;font-family:'Liberation Sans',sans-serif;font-weight:normal;font-size:8.55px;text-shadow:0.3px 0 0 currentColor;line-height:11px;color:#ffff00;transform:scaleX(0.8400)">05</div>
<div class="t" style="left:1143.30px;top:686.20px;font-family:'Liberation Sans',sans-serif;font-weight:normal;font-size:8.55px;text-shadow:0.3px 0 0 currentColor;line-height:11px;color:#ffff00;transform:scaleX(0.8400)">06</div>
<div class="t" style="left:640.20px;top:686.20px;font-family:'Liberation Sans',sans-serif;font-weight:normal;font-size:8.55px;text-shadow:0.3px 0 0 currentColor;line-height:11px;color:#e8e828;transform:scaleX(0.8219)">SunRise</div>
<div class="t" style="left:638.10px;top:644.20px;font-family:'Liberation Sans',sans-serif;font-weight:normal;font-size:10.00px;line-height:13px;color:#c8c830;transform:scaleX(0.9211)">SunRise</div>
</body></html>
